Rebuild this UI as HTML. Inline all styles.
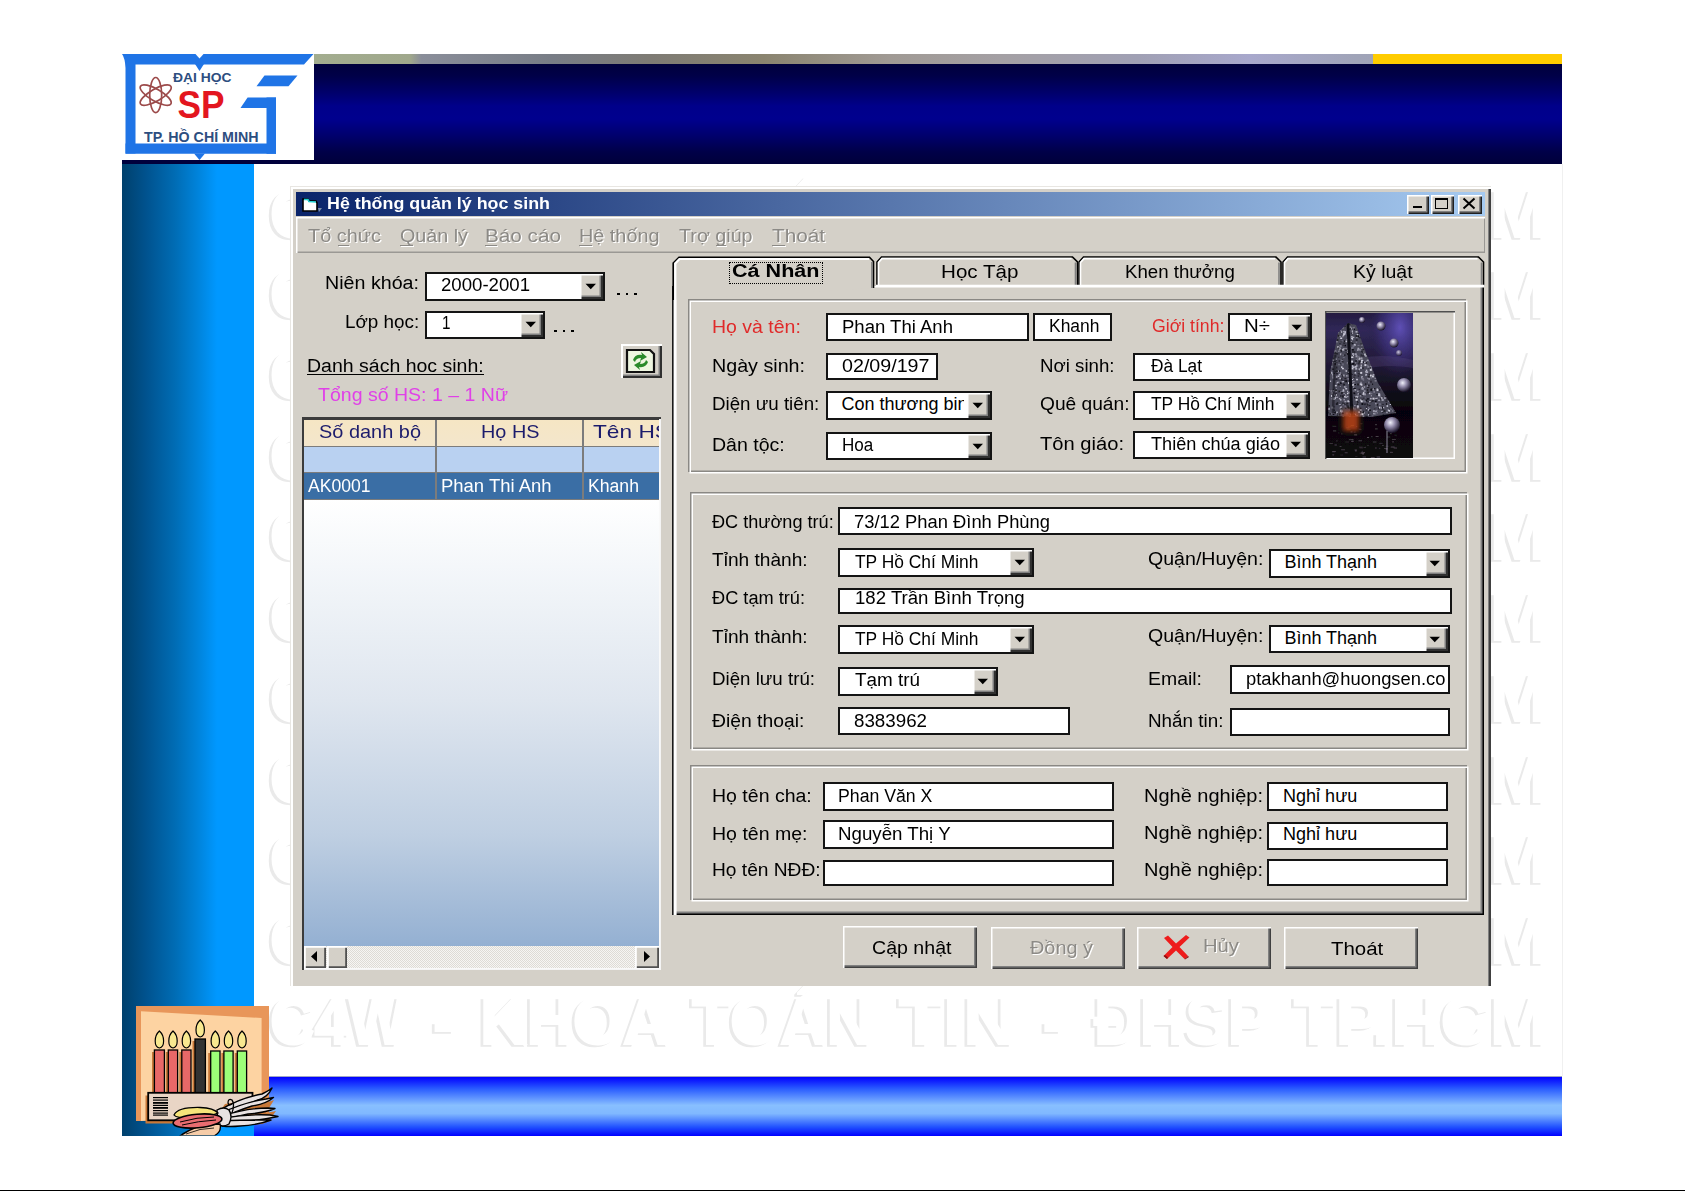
<!DOCTYPE html>
<html><head><meta charset="utf-8"><style>
html,body{margin:0;padding:0;}
body{width:1685px;height:1191px;position:relative;overflow:hidden;background:#fff;font-family:"Liberation Sans",sans-serif;}
.t{position:absolute;white-space:pre;line-height:1;transform-origin:0 0;}
</style></head><body>
<div style="position:absolute;left:0px;top:1190px;width:1685px;height:1px;background:#000"></div>
<div style="position:absolute;left:314px;top:54px;width:1248px;height:10px;background:linear-gradient(90deg,#a3ad8f 0%,#a0a88c 7.7%,#8a8e9a 8.6%,#787d86 19%,#7e7b74 27%,#8a846f 36%,#a09a94 46%,#a4a0a4 55%,#a0a0b4 66%,#a8a8cc 75%,#a0a4b8 83.5%,#9ca0b4 100%)"></div>
<div style="position:absolute;left:1373px;top:54px;width:189px;height:10px;background:#ffcc00"></div>
<div style="position:absolute;left:314px;top:64px;width:1248px;height:100px;background:linear-gradient(180deg,#00003c 0%,#000048 12%,#00006e 30%,#00008a 42%,#00008e 55%,#00006c 72%,#000048 88%,#00003a 100%)"></div>
<div style="position:absolute;left:122px;top:160px;width:192px;height:4px;background:#00003c"></div>
<div style="position:absolute;left:122px;top:54px;width:192px;height:106px;background:#fff"></div>
<div style="position:absolute;left:122px;top:164px;width:132px;height:972px;background:linear-gradient(90deg,#00406c 0%,#00528e 18%,#006cb4 40%,#0084dc 58%,#0098ff 72%,#0098ff 100%)"></div>
<div style="position:absolute;left:254px;top:1076px;width:1308px;height:1px;background:#a0a8c4"></div>
<div style="position:absolute;left:1562px;top:164px;width:1px;height:912px;background:#f0f0f0"></div>
<div style="position:absolute;left:254px;top:1077px;width:1308px;height:59px;background:linear-gradient(180deg,#0000ff 0%,#2a5cff 20%,#88bfff 48%,#80b8ff 62%,#2050ff 85%,#0000ff 100%)"></div>
<div class="t" style="left:266.7px;top:182.62px;font-size:66px;color:#eaeaea;font-weight:700;transform:scale(0.9332,1.0);-webkit-text-stroke:1.5px #eaeaea;filter:blur(0.5px);">C4W</div>
<div class="t" style="left:429.9px;top:182.62px;font-size:66px;color:#eaeaea;font-weight:700;transform:scale(1.0389,1.0);-webkit-text-stroke:1.5px #eaeaea;filter:blur(0.5px);">-</div>
<div class="t" style="left:477.1px;top:182.62px;font-size:66px;color:#eaeaea;font-weight:700;transform:scale(0.9735,1.0);-webkit-text-stroke:1.5px #eaeaea;filter:blur(0.5px);">KHOA</div>
<div class="t" style="left:689.0px;top:182.62px;font-size:66px;color:#eaeaea;font-weight:700;transform:scale(0.9740,1.0);-webkit-text-stroke:1.5px #eaeaea;filter:blur(0.5px);">TOÁN</div>
<div class="t" style="left:896.0px;top:182.62px;font-size:66px;color:#eaeaea;font-weight:700;transform:scale(1.0979,1.0);-webkit-text-stroke:1.5px #eaeaea;filter:blur(0.5px);">TIN</div>
<div class="t" style="left:1039.8px;top:182.62px;font-size:66px;color:#eaeaea;font-weight:700;transform:scale(0.8889,1.0);-webkit-text-stroke:1.5px #eaeaea;filter:blur(0.5px);">-</div>
<div class="t" style="left:1091.0px;top:182.62px;font-size:66px;color:#eaeaea;font-weight:700;transform:scale(0.9595,1.0);-webkit-text-stroke:1.5px #eaeaea;filter:blur(0.5px);">ĐHSP</div>
<div class="t" style="left:1291.0px;top:182.62px;font-size:66px;color:#eaeaea;font-weight:700;transform:scale(1.0354,1.0);-webkit-text-stroke:1.5px #eaeaea;filter:blur(0.5px);">TP.HCM</div>
<div class="t" style="left:269.7px;top:180.62px;font-size:66px;color:#ffffff;font-weight:700;transform:scale(0.9332,1.0);-webkit-text-stroke:2px #fff;">C4W</div>
<div class="t" style="left:432.9px;top:180.62px;font-size:66px;color:#ffffff;font-weight:700;transform:scale(1.0389,1.0);-webkit-text-stroke:2px #fff;">-</div>
<div class="t" style="left:480.1px;top:180.62px;font-size:66px;color:#ffffff;font-weight:700;transform:scale(0.9735,1.0);-webkit-text-stroke:2px #fff;">KHOA</div>
<div class="t" style="left:692.0px;top:180.62px;font-size:66px;color:#ffffff;font-weight:700;transform:scale(0.9740,1.0);-webkit-text-stroke:2px #fff;">TOÁN</div>
<div class="t" style="left:899.0px;top:180.62px;font-size:66px;color:#ffffff;font-weight:700;transform:scale(1.0979,1.0);-webkit-text-stroke:2px #fff;">TIN</div>
<div class="t" style="left:1042.8px;top:180.62px;font-size:66px;color:#ffffff;font-weight:700;transform:scale(0.8889,1.0);-webkit-text-stroke:2px #fff;">-</div>
<div class="t" style="left:1094.0px;top:180.62px;font-size:66px;color:#ffffff;font-weight:700;transform:scale(0.9595,1.0);-webkit-text-stroke:2px #fff;">ĐHSP</div>
<div class="t" style="left:1294.0px;top:180.62px;font-size:66px;color:#ffffff;font-weight:700;transform:scale(1.0354,1.0);-webkit-text-stroke:2px #fff;">TP.HCM</div>
<div class="t" style="left:266.7px;top:263.32px;font-size:66px;color:#eaeaea;font-weight:700;transform:scale(0.9332,1.0);-webkit-text-stroke:1.5px #eaeaea;filter:blur(0.5px);">C4W</div>
<div class="t" style="left:429.9px;top:263.32px;font-size:66px;color:#eaeaea;font-weight:700;transform:scale(1.0389,1.0);-webkit-text-stroke:1.5px #eaeaea;filter:blur(0.5px);">-</div>
<div class="t" style="left:477.1px;top:263.32px;font-size:66px;color:#eaeaea;font-weight:700;transform:scale(0.9735,1.0);-webkit-text-stroke:1.5px #eaeaea;filter:blur(0.5px);">KHOA</div>
<div class="t" style="left:689.0px;top:263.32px;font-size:66px;color:#eaeaea;font-weight:700;transform:scale(0.9740,1.0);-webkit-text-stroke:1.5px #eaeaea;filter:blur(0.5px);">TOÁN</div>
<div class="t" style="left:896.0px;top:263.32px;font-size:66px;color:#eaeaea;font-weight:700;transform:scale(1.0979,1.0);-webkit-text-stroke:1.5px #eaeaea;filter:blur(0.5px);">TIN</div>
<div class="t" style="left:1039.8px;top:263.32px;font-size:66px;color:#eaeaea;font-weight:700;transform:scale(0.8889,1.0);-webkit-text-stroke:1.5px #eaeaea;filter:blur(0.5px);">-</div>
<div class="t" style="left:1091.0px;top:263.32px;font-size:66px;color:#eaeaea;font-weight:700;transform:scale(0.9595,1.0);-webkit-text-stroke:1.5px #eaeaea;filter:blur(0.5px);">ĐHSP</div>
<div class="t" style="left:1291.0px;top:263.32px;font-size:66px;color:#eaeaea;font-weight:700;transform:scale(1.0354,1.0);-webkit-text-stroke:1.5px #eaeaea;filter:blur(0.5px);">TP.HCM</div>
<div class="t" style="left:269.7px;top:261.32px;font-size:66px;color:#ffffff;font-weight:700;transform:scale(0.9332,1.0);-webkit-text-stroke:2px #fff;">C4W</div>
<div class="t" style="left:432.9px;top:261.32px;font-size:66px;color:#ffffff;font-weight:700;transform:scale(1.0389,1.0);-webkit-text-stroke:2px #fff;">-</div>
<div class="t" style="left:480.1px;top:261.32px;font-size:66px;color:#ffffff;font-weight:700;transform:scale(0.9735,1.0);-webkit-text-stroke:2px #fff;">KHOA</div>
<div class="t" style="left:692.0px;top:261.32px;font-size:66px;color:#ffffff;font-weight:700;transform:scale(0.9740,1.0);-webkit-text-stroke:2px #fff;">TOÁN</div>
<div class="t" style="left:899.0px;top:261.32px;font-size:66px;color:#ffffff;font-weight:700;transform:scale(1.0979,1.0);-webkit-text-stroke:2px #fff;">TIN</div>
<div class="t" style="left:1042.8px;top:261.32px;font-size:66px;color:#ffffff;font-weight:700;transform:scale(0.8889,1.0);-webkit-text-stroke:2px #fff;">-</div>
<div class="t" style="left:1094.0px;top:261.32px;font-size:66px;color:#ffffff;font-weight:700;transform:scale(0.9595,1.0);-webkit-text-stroke:2px #fff;">ĐHSP</div>
<div class="t" style="left:1294.0px;top:261.32px;font-size:66px;color:#ffffff;font-weight:700;transform:scale(1.0354,1.0);-webkit-text-stroke:2px #fff;">TP.HCM</div>
<div class="t" style="left:266.7px;top:344.02px;font-size:66px;color:#eaeaea;font-weight:700;transform:scale(0.9332,1.0);-webkit-text-stroke:1.5px #eaeaea;filter:blur(0.5px);">C4W</div>
<div class="t" style="left:429.9px;top:344.02px;font-size:66px;color:#eaeaea;font-weight:700;transform:scale(1.0389,1.0);-webkit-text-stroke:1.5px #eaeaea;filter:blur(0.5px);">-</div>
<div class="t" style="left:477.1px;top:344.02px;font-size:66px;color:#eaeaea;font-weight:700;transform:scale(0.9735,1.0);-webkit-text-stroke:1.5px #eaeaea;filter:blur(0.5px);">KHOA</div>
<div class="t" style="left:689.0px;top:344.02px;font-size:66px;color:#eaeaea;font-weight:700;transform:scale(0.9740,1.0);-webkit-text-stroke:1.5px #eaeaea;filter:blur(0.5px);">TOÁN</div>
<div class="t" style="left:896.0px;top:344.02px;font-size:66px;color:#eaeaea;font-weight:700;transform:scale(1.0979,1.0);-webkit-text-stroke:1.5px #eaeaea;filter:blur(0.5px);">TIN</div>
<div class="t" style="left:1039.8px;top:344.02px;font-size:66px;color:#eaeaea;font-weight:700;transform:scale(0.8889,1.0);-webkit-text-stroke:1.5px #eaeaea;filter:blur(0.5px);">-</div>
<div class="t" style="left:1091.0px;top:344.02px;font-size:66px;color:#eaeaea;font-weight:700;transform:scale(0.9595,1.0);-webkit-text-stroke:1.5px #eaeaea;filter:blur(0.5px);">ĐHSP</div>
<div class="t" style="left:1291.0px;top:344.02px;font-size:66px;color:#eaeaea;font-weight:700;transform:scale(1.0354,1.0);-webkit-text-stroke:1.5px #eaeaea;filter:blur(0.5px);">TP.HCM</div>
<div class="t" style="left:269.7px;top:342.02px;font-size:66px;color:#ffffff;font-weight:700;transform:scale(0.9332,1.0);-webkit-text-stroke:2px #fff;">C4W</div>
<div class="t" style="left:432.9px;top:342.02px;font-size:66px;color:#ffffff;font-weight:700;transform:scale(1.0389,1.0);-webkit-text-stroke:2px #fff;">-</div>
<div class="t" style="left:480.1px;top:342.02px;font-size:66px;color:#ffffff;font-weight:700;transform:scale(0.9735,1.0);-webkit-text-stroke:2px #fff;">KHOA</div>
<div class="t" style="left:692.0px;top:342.02px;font-size:66px;color:#ffffff;font-weight:700;transform:scale(0.9740,1.0);-webkit-text-stroke:2px #fff;">TOÁN</div>
<div class="t" style="left:899.0px;top:342.02px;font-size:66px;color:#ffffff;font-weight:700;transform:scale(1.0979,1.0);-webkit-text-stroke:2px #fff;">TIN</div>
<div class="t" style="left:1042.8px;top:342.02px;font-size:66px;color:#ffffff;font-weight:700;transform:scale(0.8889,1.0);-webkit-text-stroke:2px #fff;">-</div>
<div class="t" style="left:1094.0px;top:342.02px;font-size:66px;color:#ffffff;font-weight:700;transform:scale(0.9595,1.0);-webkit-text-stroke:2px #fff;">ĐHSP</div>
<div class="t" style="left:1294.0px;top:342.02px;font-size:66px;color:#ffffff;font-weight:700;transform:scale(1.0354,1.0);-webkit-text-stroke:2px #fff;">TP.HCM</div>
<div class="t" style="left:266.7px;top:424.72px;font-size:66px;color:#eaeaea;font-weight:700;transform:scale(0.9332,1.0);-webkit-text-stroke:1.5px #eaeaea;filter:blur(0.5px);">C4W</div>
<div class="t" style="left:429.9px;top:424.72px;font-size:66px;color:#eaeaea;font-weight:700;transform:scale(1.0389,1.0);-webkit-text-stroke:1.5px #eaeaea;filter:blur(0.5px);">-</div>
<div class="t" style="left:477.1px;top:424.72px;font-size:66px;color:#eaeaea;font-weight:700;transform:scale(0.9735,1.0);-webkit-text-stroke:1.5px #eaeaea;filter:blur(0.5px);">KHOA</div>
<div class="t" style="left:689.0px;top:424.72px;font-size:66px;color:#eaeaea;font-weight:700;transform:scale(0.9740,1.0);-webkit-text-stroke:1.5px #eaeaea;filter:blur(0.5px);">TOÁN</div>
<div class="t" style="left:896.0px;top:424.72px;font-size:66px;color:#eaeaea;font-weight:700;transform:scale(1.0979,1.0);-webkit-text-stroke:1.5px #eaeaea;filter:blur(0.5px);">TIN</div>
<div class="t" style="left:1039.8px;top:424.72px;font-size:66px;color:#eaeaea;font-weight:700;transform:scale(0.8889,1.0);-webkit-text-stroke:1.5px #eaeaea;filter:blur(0.5px);">-</div>
<div class="t" style="left:1091.0px;top:424.72px;font-size:66px;color:#eaeaea;font-weight:700;transform:scale(0.9595,1.0);-webkit-text-stroke:1.5px #eaeaea;filter:blur(0.5px);">ĐHSP</div>
<div class="t" style="left:1291.0px;top:424.72px;font-size:66px;color:#eaeaea;font-weight:700;transform:scale(1.0354,1.0);-webkit-text-stroke:1.5px #eaeaea;filter:blur(0.5px);">TP.HCM</div>
<div class="t" style="left:269.7px;top:422.72px;font-size:66px;color:#ffffff;font-weight:700;transform:scale(0.9332,1.0);-webkit-text-stroke:2px #fff;">C4W</div>
<div class="t" style="left:432.9px;top:422.72px;font-size:66px;color:#ffffff;font-weight:700;transform:scale(1.0389,1.0);-webkit-text-stroke:2px #fff;">-</div>
<div class="t" style="left:480.1px;top:422.72px;font-size:66px;color:#ffffff;font-weight:700;transform:scale(0.9735,1.0);-webkit-text-stroke:2px #fff;">KHOA</div>
<div class="t" style="left:692.0px;top:422.72px;font-size:66px;color:#ffffff;font-weight:700;transform:scale(0.9740,1.0);-webkit-text-stroke:2px #fff;">TOÁN</div>
<div class="t" style="left:899.0px;top:422.72px;font-size:66px;color:#ffffff;font-weight:700;transform:scale(1.0979,1.0);-webkit-text-stroke:2px #fff;">TIN</div>
<div class="t" style="left:1042.8px;top:422.72px;font-size:66px;color:#ffffff;font-weight:700;transform:scale(0.8889,1.0);-webkit-text-stroke:2px #fff;">-</div>
<div class="t" style="left:1094.0px;top:422.72px;font-size:66px;color:#ffffff;font-weight:700;transform:scale(0.9595,1.0);-webkit-text-stroke:2px #fff;">ĐHSP</div>
<div class="t" style="left:1294.0px;top:422.72px;font-size:66px;color:#ffffff;font-weight:700;transform:scale(1.0354,1.0);-webkit-text-stroke:2px #fff;">TP.HCM</div>
<div class="t" style="left:266.7px;top:505.42px;font-size:66px;color:#eaeaea;font-weight:700;transform:scale(0.9332,1.0);-webkit-text-stroke:1.5px #eaeaea;filter:blur(0.5px);">C4W</div>
<div class="t" style="left:429.9px;top:505.42px;font-size:66px;color:#eaeaea;font-weight:700;transform:scale(1.0389,1.0);-webkit-text-stroke:1.5px #eaeaea;filter:blur(0.5px);">-</div>
<div class="t" style="left:477.1px;top:505.42px;font-size:66px;color:#eaeaea;font-weight:700;transform:scale(0.9735,1.0);-webkit-text-stroke:1.5px #eaeaea;filter:blur(0.5px);">KHOA</div>
<div class="t" style="left:689.0px;top:505.42px;font-size:66px;color:#eaeaea;font-weight:700;transform:scale(0.9740,1.0);-webkit-text-stroke:1.5px #eaeaea;filter:blur(0.5px);">TOÁN</div>
<div class="t" style="left:896.0px;top:505.42px;font-size:66px;color:#eaeaea;font-weight:700;transform:scale(1.0979,1.0);-webkit-text-stroke:1.5px #eaeaea;filter:blur(0.5px);">TIN</div>
<div class="t" style="left:1039.8px;top:505.42px;font-size:66px;color:#eaeaea;font-weight:700;transform:scale(0.8889,1.0);-webkit-text-stroke:1.5px #eaeaea;filter:blur(0.5px);">-</div>
<div class="t" style="left:1091.0px;top:505.42px;font-size:66px;color:#eaeaea;font-weight:700;transform:scale(0.9595,1.0);-webkit-text-stroke:1.5px #eaeaea;filter:blur(0.5px);">ĐHSP</div>
<div class="t" style="left:1291.0px;top:505.42px;font-size:66px;color:#eaeaea;font-weight:700;transform:scale(1.0354,1.0);-webkit-text-stroke:1.5px #eaeaea;filter:blur(0.5px);">TP.HCM</div>
<div class="t" style="left:269.7px;top:503.42px;font-size:66px;color:#ffffff;font-weight:700;transform:scale(0.9332,1.0);-webkit-text-stroke:2px #fff;">C4W</div>
<div class="t" style="left:432.9px;top:503.42px;font-size:66px;color:#ffffff;font-weight:700;transform:scale(1.0389,1.0);-webkit-text-stroke:2px #fff;">-</div>
<div class="t" style="left:480.1px;top:503.42px;font-size:66px;color:#ffffff;font-weight:700;transform:scale(0.9735,1.0);-webkit-text-stroke:2px #fff;">KHOA</div>
<div class="t" style="left:692.0px;top:503.42px;font-size:66px;color:#ffffff;font-weight:700;transform:scale(0.9740,1.0);-webkit-text-stroke:2px #fff;">TOÁN</div>
<div class="t" style="left:899.0px;top:503.42px;font-size:66px;color:#ffffff;font-weight:700;transform:scale(1.0979,1.0);-webkit-text-stroke:2px #fff;">TIN</div>
<div class="t" style="left:1042.8px;top:503.42px;font-size:66px;color:#ffffff;font-weight:700;transform:scale(0.8889,1.0);-webkit-text-stroke:2px #fff;">-</div>
<div class="t" style="left:1094.0px;top:503.42px;font-size:66px;color:#ffffff;font-weight:700;transform:scale(0.9595,1.0);-webkit-text-stroke:2px #fff;">ĐHSP</div>
<div class="t" style="left:1294.0px;top:503.42px;font-size:66px;color:#ffffff;font-weight:700;transform:scale(1.0354,1.0);-webkit-text-stroke:2px #fff;">TP.HCM</div>
<div class="t" style="left:266.7px;top:586.12px;font-size:66px;color:#eaeaea;font-weight:700;transform:scale(0.9332,1.0);-webkit-text-stroke:1.5px #eaeaea;filter:blur(0.5px);">C4W</div>
<div class="t" style="left:429.9px;top:586.12px;font-size:66px;color:#eaeaea;font-weight:700;transform:scale(1.0389,1.0);-webkit-text-stroke:1.5px #eaeaea;filter:blur(0.5px);">-</div>
<div class="t" style="left:477.1px;top:586.12px;font-size:66px;color:#eaeaea;font-weight:700;transform:scale(0.9735,1.0);-webkit-text-stroke:1.5px #eaeaea;filter:blur(0.5px);">KHOA</div>
<div class="t" style="left:689.0px;top:586.12px;font-size:66px;color:#eaeaea;font-weight:700;transform:scale(0.9740,1.0);-webkit-text-stroke:1.5px #eaeaea;filter:blur(0.5px);">TOÁN</div>
<div class="t" style="left:896.0px;top:586.12px;font-size:66px;color:#eaeaea;font-weight:700;transform:scale(1.0979,1.0);-webkit-text-stroke:1.5px #eaeaea;filter:blur(0.5px);">TIN</div>
<div class="t" style="left:1039.8px;top:586.12px;font-size:66px;color:#eaeaea;font-weight:700;transform:scale(0.8889,1.0);-webkit-text-stroke:1.5px #eaeaea;filter:blur(0.5px);">-</div>
<div class="t" style="left:1091.0px;top:586.12px;font-size:66px;color:#eaeaea;font-weight:700;transform:scale(0.9595,1.0);-webkit-text-stroke:1.5px #eaeaea;filter:blur(0.5px);">ĐHSP</div>
<div class="t" style="left:1291.0px;top:586.12px;font-size:66px;color:#eaeaea;font-weight:700;transform:scale(1.0354,1.0);-webkit-text-stroke:1.5px #eaeaea;filter:blur(0.5px);">TP.HCM</div>
<div class="t" style="left:269.7px;top:584.12px;font-size:66px;color:#ffffff;font-weight:700;transform:scale(0.9332,1.0);-webkit-text-stroke:2px #fff;">C4W</div>
<div class="t" style="left:432.9px;top:584.12px;font-size:66px;color:#ffffff;font-weight:700;transform:scale(1.0389,1.0);-webkit-text-stroke:2px #fff;">-</div>
<div class="t" style="left:480.1px;top:584.12px;font-size:66px;color:#ffffff;font-weight:700;transform:scale(0.9735,1.0);-webkit-text-stroke:2px #fff;">KHOA</div>
<div class="t" style="left:692.0px;top:584.12px;font-size:66px;color:#ffffff;font-weight:700;transform:scale(0.9740,1.0);-webkit-text-stroke:2px #fff;">TOÁN</div>
<div class="t" style="left:899.0px;top:584.12px;font-size:66px;color:#ffffff;font-weight:700;transform:scale(1.0979,1.0);-webkit-text-stroke:2px #fff;">TIN</div>
<div class="t" style="left:1042.8px;top:584.12px;font-size:66px;color:#ffffff;font-weight:700;transform:scale(0.8889,1.0);-webkit-text-stroke:2px #fff;">-</div>
<div class="t" style="left:1094.0px;top:584.12px;font-size:66px;color:#ffffff;font-weight:700;transform:scale(0.9595,1.0);-webkit-text-stroke:2px #fff;">ĐHSP</div>
<div class="t" style="left:1294.0px;top:584.12px;font-size:66px;color:#ffffff;font-weight:700;transform:scale(1.0354,1.0);-webkit-text-stroke:2px #fff;">TP.HCM</div>
<div class="t" style="left:266.7px;top:666.82px;font-size:66px;color:#eaeaea;font-weight:700;transform:scale(0.9332,1.0);-webkit-text-stroke:1.5px #eaeaea;filter:blur(0.5px);">C4W</div>
<div class="t" style="left:429.9px;top:666.82px;font-size:66px;color:#eaeaea;font-weight:700;transform:scale(1.0389,1.0);-webkit-text-stroke:1.5px #eaeaea;filter:blur(0.5px);">-</div>
<div class="t" style="left:477.1px;top:666.82px;font-size:66px;color:#eaeaea;font-weight:700;transform:scale(0.9735,1.0);-webkit-text-stroke:1.5px #eaeaea;filter:blur(0.5px);">KHOA</div>
<div class="t" style="left:689.0px;top:666.82px;font-size:66px;color:#eaeaea;font-weight:700;transform:scale(0.9740,1.0);-webkit-text-stroke:1.5px #eaeaea;filter:blur(0.5px);">TOÁN</div>
<div class="t" style="left:896.0px;top:666.82px;font-size:66px;color:#eaeaea;font-weight:700;transform:scale(1.0979,1.0);-webkit-text-stroke:1.5px #eaeaea;filter:blur(0.5px);">TIN</div>
<div class="t" style="left:1039.8px;top:666.82px;font-size:66px;color:#eaeaea;font-weight:700;transform:scale(0.8889,1.0);-webkit-text-stroke:1.5px #eaeaea;filter:blur(0.5px);">-</div>
<div class="t" style="left:1091.0px;top:666.82px;font-size:66px;color:#eaeaea;font-weight:700;transform:scale(0.9595,1.0);-webkit-text-stroke:1.5px #eaeaea;filter:blur(0.5px);">ĐHSP</div>
<div class="t" style="left:1291.0px;top:666.82px;font-size:66px;color:#eaeaea;font-weight:700;transform:scale(1.0354,1.0);-webkit-text-stroke:1.5px #eaeaea;filter:blur(0.5px);">TP.HCM</div>
<div class="t" style="left:269.7px;top:664.82px;font-size:66px;color:#ffffff;font-weight:700;transform:scale(0.9332,1.0);-webkit-text-stroke:2px #fff;">C4W</div>
<div class="t" style="left:432.9px;top:664.82px;font-size:66px;color:#ffffff;font-weight:700;transform:scale(1.0389,1.0);-webkit-text-stroke:2px #fff;">-</div>
<div class="t" style="left:480.1px;top:664.82px;font-size:66px;color:#ffffff;font-weight:700;transform:scale(0.9735,1.0);-webkit-text-stroke:2px #fff;">KHOA</div>
<div class="t" style="left:692.0px;top:664.82px;font-size:66px;color:#ffffff;font-weight:700;transform:scale(0.9740,1.0);-webkit-text-stroke:2px #fff;">TOÁN</div>
<div class="t" style="left:899.0px;top:664.82px;font-size:66px;color:#ffffff;font-weight:700;transform:scale(1.0979,1.0);-webkit-text-stroke:2px #fff;">TIN</div>
<div class="t" style="left:1042.8px;top:664.82px;font-size:66px;color:#ffffff;font-weight:700;transform:scale(0.8889,1.0);-webkit-text-stroke:2px #fff;">-</div>
<div class="t" style="left:1094.0px;top:664.82px;font-size:66px;color:#ffffff;font-weight:700;transform:scale(0.9595,1.0);-webkit-text-stroke:2px #fff;">ĐHSP</div>
<div class="t" style="left:1294.0px;top:664.82px;font-size:66px;color:#ffffff;font-weight:700;transform:scale(1.0354,1.0);-webkit-text-stroke:2px #fff;">TP.HCM</div>
<div class="t" style="left:266.7px;top:747.52px;font-size:66px;color:#eaeaea;font-weight:700;transform:scale(0.9332,1.0);-webkit-text-stroke:1.5px #eaeaea;filter:blur(0.5px);">C4W</div>
<div class="t" style="left:429.9px;top:747.52px;font-size:66px;color:#eaeaea;font-weight:700;transform:scale(1.0389,1.0);-webkit-text-stroke:1.5px #eaeaea;filter:blur(0.5px);">-</div>
<div class="t" style="left:477.1px;top:747.52px;font-size:66px;color:#eaeaea;font-weight:700;transform:scale(0.9735,1.0);-webkit-text-stroke:1.5px #eaeaea;filter:blur(0.5px);">KHOA</div>
<div class="t" style="left:689.0px;top:747.52px;font-size:66px;color:#eaeaea;font-weight:700;transform:scale(0.9740,1.0);-webkit-text-stroke:1.5px #eaeaea;filter:blur(0.5px);">TOÁN</div>
<div class="t" style="left:896.0px;top:747.52px;font-size:66px;color:#eaeaea;font-weight:700;transform:scale(1.0979,1.0);-webkit-text-stroke:1.5px #eaeaea;filter:blur(0.5px);">TIN</div>
<div class="t" style="left:1039.8px;top:747.52px;font-size:66px;color:#eaeaea;font-weight:700;transform:scale(0.8889,1.0);-webkit-text-stroke:1.5px #eaeaea;filter:blur(0.5px);">-</div>
<div class="t" style="left:1091.0px;top:747.52px;font-size:66px;color:#eaeaea;font-weight:700;transform:scale(0.9595,1.0);-webkit-text-stroke:1.5px #eaeaea;filter:blur(0.5px);">ĐHSP</div>
<div class="t" style="left:1291.0px;top:747.52px;font-size:66px;color:#eaeaea;font-weight:700;transform:scale(1.0354,1.0);-webkit-text-stroke:1.5px #eaeaea;filter:blur(0.5px);">TP.HCM</div>
<div class="t" style="left:269.7px;top:745.52px;font-size:66px;color:#ffffff;font-weight:700;transform:scale(0.9332,1.0);-webkit-text-stroke:2px #fff;">C4W</div>
<div class="t" style="left:432.9px;top:745.52px;font-size:66px;color:#ffffff;font-weight:700;transform:scale(1.0389,1.0);-webkit-text-stroke:2px #fff;">-</div>
<div class="t" style="left:480.1px;top:745.52px;font-size:66px;color:#ffffff;font-weight:700;transform:scale(0.9735,1.0);-webkit-text-stroke:2px #fff;">KHOA</div>
<div class="t" style="left:692.0px;top:745.52px;font-size:66px;color:#ffffff;font-weight:700;transform:scale(0.9740,1.0);-webkit-text-stroke:2px #fff;">TOÁN</div>
<div class="t" style="left:899.0px;top:745.52px;font-size:66px;color:#ffffff;font-weight:700;transform:scale(1.0979,1.0);-webkit-text-stroke:2px #fff;">TIN</div>
<div class="t" style="left:1042.8px;top:745.52px;font-size:66px;color:#ffffff;font-weight:700;transform:scale(0.8889,1.0);-webkit-text-stroke:2px #fff;">-</div>
<div class="t" style="left:1094.0px;top:745.52px;font-size:66px;color:#ffffff;font-weight:700;transform:scale(0.9595,1.0);-webkit-text-stroke:2px #fff;">ĐHSP</div>
<div class="t" style="left:1294.0px;top:745.52px;font-size:66px;color:#ffffff;font-weight:700;transform:scale(1.0354,1.0);-webkit-text-stroke:2px #fff;">TP.HCM</div>
<div class="t" style="left:266.7px;top:828.22px;font-size:66px;color:#eaeaea;font-weight:700;transform:scale(0.9332,1.0);-webkit-text-stroke:1.5px #eaeaea;filter:blur(0.5px);">C4W</div>
<div class="t" style="left:429.9px;top:828.22px;font-size:66px;color:#eaeaea;font-weight:700;transform:scale(1.0389,1.0);-webkit-text-stroke:1.5px #eaeaea;filter:blur(0.5px);">-</div>
<div class="t" style="left:477.1px;top:828.22px;font-size:66px;color:#eaeaea;font-weight:700;transform:scale(0.9735,1.0);-webkit-text-stroke:1.5px #eaeaea;filter:blur(0.5px);">KHOA</div>
<div class="t" style="left:689.0px;top:828.22px;font-size:66px;color:#eaeaea;font-weight:700;transform:scale(0.9740,1.0);-webkit-text-stroke:1.5px #eaeaea;filter:blur(0.5px);">TOÁN</div>
<div class="t" style="left:896.0px;top:828.22px;font-size:66px;color:#eaeaea;font-weight:700;transform:scale(1.0979,1.0);-webkit-text-stroke:1.5px #eaeaea;filter:blur(0.5px);">TIN</div>
<div class="t" style="left:1039.8px;top:828.22px;font-size:66px;color:#eaeaea;font-weight:700;transform:scale(0.8889,1.0);-webkit-text-stroke:1.5px #eaeaea;filter:blur(0.5px);">-</div>
<div class="t" style="left:1091.0px;top:828.22px;font-size:66px;color:#eaeaea;font-weight:700;transform:scale(0.9595,1.0);-webkit-text-stroke:1.5px #eaeaea;filter:blur(0.5px);">ĐHSP</div>
<div class="t" style="left:1291.0px;top:828.22px;font-size:66px;color:#eaeaea;font-weight:700;transform:scale(1.0354,1.0);-webkit-text-stroke:1.5px #eaeaea;filter:blur(0.5px);">TP.HCM</div>
<div class="t" style="left:269.7px;top:826.22px;font-size:66px;color:#ffffff;font-weight:700;transform:scale(0.9332,1.0);-webkit-text-stroke:2px #fff;">C4W</div>
<div class="t" style="left:432.9px;top:826.22px;font-size:66px;color:#ffffff;font-weight:700;transform:scale(1.0389,1.0);-webkit-text-stroke:2px #fff;">-</div>
<div class="t" style="left:480.1px;top:826.22px;font-size:66px;color:#ffffff;font-weight:700;transform:scale(0.9735,1.0);-webkit-text-stroke:2px #fff;">KHOA</div>
<div class="t" style="left:692.0px;top:826.22px;font-size:66px;color:#ffffff;font-weight:700;transform:scale(0.9740,1.0);-webkit-text-stroke:2px #fff;">TOÁN</div>
<div class="t" style="left:899.0px;top:826.22px;font-size:66px;color:#ffffff;font-weight:700;transform:scale(1.0979,1.0);-webkit-text-stroke:2px #fff;">TIN</div>
<div class="t" style="left:1042.8px;top:826.22px;font-size:66px;color:#ffffff;font-weight:700;transform:scale(0.8889,1.0);-webkit-text-stroke:2px #fff;">-</div>
<div class="t" style="left:1094.0px;top:826.22px;font-size:66px;color:#ffffff;font-weight:700;transform:scale(0.9595,1.0);-webkit-text-stroke:2px #fff;">ĐHSP</div>
<div class="t" style="left:1294.0px;top:826.22px;font-size:66px;color:#ffffff;font-weight:700;transform:scale(1.0354,1.0);-webkit-text-stroke:2px #fff;">TP.HCM</div>
<div class="t" style="left:266.7px;top:908.92px;font-size:66px;color:#eaeaea;font-weight:700;transform:scale(0.9332,1.0);-webkit-text-stroke:1.5px #eaeaea;filter:blur(0.5px);">C4W</div>
<div class="t" style="left:429.9px;top:908.92px;font-size:66px;color:#eaeaea;font-weight:700;transform:scale(1.0389,1.0);-webkit-text-stroke:1.5px #eaeaea;filter:blur(0.5px);">-</div>
<div class="t" style="left:477.1px;top:908.92px;font-size:66px;color:#eaeaea;font-weight:700;transform:scale(0.9735,1.0);-webkit-text-stroke:1.5px #eaeaea;filter:blur(0.5px);">KHOA</div>
<div class="t" style="left:689.0px;top:908.92px;font-size:66px;color:#eaeaea;font-weight:700;transform:scale(0.9740,1.0);-webkit-text-stroke:1.5px #eaeaea;filter:blur(0.5px);">TOÁN</div>
<div class="t" style="left:896.0px;top:908.92px;font-size:66px;color:#eaeaea;font-weight:700;transform:scale(1.0979,1.0);-webkit-text-stroke:1.5px #eaeaea;filter:blur(0.5px);">TIN</div>
<div class="t" style="left:1039.8px;top:908.92px;font-size:66px;color:#eaeaea;font-weight:700;transform:scale(0.8889,1.0);-webkit-text-stroke:1.5px #eaeaea;filter:blur(0.5px);">-</div>
<div class="t" style="left:1091.0px;top:908.92px;font-size:66px;color:#eaeaea;font-weight:700;transform:scale(0.9595,1.0);-webkit-text-stroke:1.5px #eaeaea;filter:blur(0.5px);">ĐHSP</div>
<div class="t" style="left:1291.0px;top:908.92px;font-size:66px;color:#eaeaea;font-weight:700;transform:scale(1.0354,1.0);-webkit-text-stroke:1.5px #eaeaea;filter:blur(0.5px);">TP.HCM</div>
<div class="t" style="left:269.7px;top:906.92px;font-size:66px;color:#ffffff;font-weight:700;transform:scale(0.9332,1.0);-webkit-text-stroke:2px #fff;">C4W</div>
<div class="t" style="left:432.9px;top:906.92px;font-size:66px;color:#ffffff;font-weight:700;transform:scale(1.0389,1.0);-webkit-text-stroke:2px #fff;">-</div>
<div class="t" style="left:480.1px;top:906.92px;font-size:66px;color:#ffffff;font-weight:700;transform:scale(0.9735,1.0);-webkit-text-stroke:2px #fff;">KHOA</div>
<div class="t" style="left:692.0px;top:906.92px;font-size:66px;color:#ffffff;font-weight:700;transform:scale(0.9740,1.0);-webkit-text-stroke:2px #fff;">TOÁN</div>
<div class="t" style="left:899.0px;top:906.92px;font-size:66px;color:#ffffff;font-weight:700;transform:scale(1.0979,1.0);-webkit-text-stroke:2px #fff;">TIN</div>
<div class="t" style="left:1042.8px;top:906.92px;font-size:66px;color:#ffffff;font-weight:700;transform:scale(0.8889,1.0);-webkit-text-stroke:2px #fff;">-</div>
<div class="t" style="left:1094.0px;top:906.92px;font-size:66px;color:#ffffff;font-weight:700;transform:scale(0.9595,1.0);-webkit-text-stroke:2px #fff;">ĐHSP</div>
<div class="t" style="left:1294.0px;top:906.92px;font-size:66px;color:#ffffff;font-weight:700;transform:scale(1.0354,1.0);-webkit-text-stroke:2px #fff;">TP.HCM</div>
<div class="t" style="left:266.7px;top:989.62px;font-size:66px;color:#eaeaea;font-weight:700;transform:scale(0.9332,1.0);-webkit-text-stroke:1.5px #eaeaea;filter:blur(0.5px);">C4W</div>
<div class="t" style="left:429.9px;top:989.62px;font-size:66px;color:#eaeaea;font-weight:700;transform:scale(1.0389,1.0);-webkit-text-stroke:1.5px #eaeaea;filter:blur(0.5px);">-</div>
<div class="t" style="left:477.1px;top:989.62px;font-size:66px;color:#eaeaea;font-weight:700;transform:scale(0.9735,1.0);-webkit-text-stroke:1.5px #eaeaea;filter:blur(0.5px);">KHOA</div>
<div class="t" style="left:689.0px;top:989.62px;font-size:66px;color:#eaeaea;font-weight:700;transform:scale(0.9740,1.0);-webkit-text-stroke:1.5px #eaeaea;filter:blur(0.5px);">TOÁN</div>
<div class="t" style="left:896.0px;top:989.62px;font-size:66px;color:#eaeaea;font-weight:700;transform:scale(1.0979,1.0);-webkit-text-stroke:1.5px #eaeaea;filter:blur(0.5px);">TIN</div>
<div class="t" style="left:1039.8px;top:989.62px;font-size:66px;color:#eaeaea;font-weight:700;transform:scale(0.8889,1.0);-webkit-text-stroke:1.5px #eaeaea;filter:blur(0.5px);">-</div>
<div class="t" style="left:1091.0px;top:989.62px;font-size:66px;color:#eaeaea;font-weight:700;transform:scale(0.9595,1.0);-webkit-text-stroke:1.5px #eaeaea;filter:blur(0.5px);">ĐHSP</div>
<div class="t" style="left:1291.0px;top:989.62px;font-size:66px;color:#eaeaea;font-weight:700;transform:scale(1.0354,1.0);-webkit-text-stroke:1.5px #eaeaea;filter:blur(0.5px);">TP.HCM</div>
<div class="t" style="left:269.7px;top:987.62px;font-size:66px;color:#ffffff;font-weight:700;transform:scale(0.9332,1.0);-webkit-text-stroke:2px #fff;">C4W</div>
<div class="t" style="left:432.9px;top:987.62px;font-size:66px;color:#ffffff;font-weight:700;transform:scale(1.0389,1.0);-webkit-text-stroke:2px #fff;">-</div>
<div class="t" style="left:480.1px;top:987.62px;font-size:66px;color:#ffffff;font-weight:700;transform:scale(0.9735,1.0);-webkit-text-stroke:2px #fff;">KHOA</div>
<div class="t" style="left:692.0px;top:987.62px;font-size:66px;color:#ffffff;font-weight:700;transform:scale(0.9740,1.0);-webkit-text-stroke:2px #fff;">TOÁN</div>
<div class="t" style="left:899.0px;top:987.62px;font-size:66px;color:#ffffff;font-weight:700;transform:scale(1.0979,1.0);-webkit-text-stroke:2px #fff;">TIN</div>
<div class="t" style="left:1042.8px;top:987.62px;font-size:66px;color:#ffffff;font-weight:700;transform:scale(0.8889,1.0);-webkit-text-stroke:2px #fff;">-</div>
<div class="t" style="left:1094.0px;top:987.62px;font-size:66px;color:#ffffff;font-weight:700;transform:scale(0.9595,1.0);-webkit-text-stroke:2px #fff;">ĐHSP</div>
<div class="t" style="left:1294.0px;top:987.62px;font-size:66px;color:#ffffff;font-weight:700;transform:scale(1.0354,1.0);-webkit-text-stroke:2px #fff;">TP.HCM</div>
<svg style="position:absolute;left:122px;top:54px" width="192" height="106" viewBox="0 0 192 106">
<g fill="#1f74e6">
<path d="M0 0 L191.5 0 L182 10.5 L13.5 10.5 L13.5 99.5 L3.5 99.5 L3.5 14 Q3 4 0 0 Z"/>
<path d="M3.5 89.5 L154 89.5 L154 99.8 L3.5 99.8 Z"/>
<path d="M144.5 43.5 L154 43.5 L154 99.8 L144.5 99.8 Z"/>
<path d="M125.6 43.5 L154 43.5 L154 54 L118.5 54 Z"/>
<path d="M142.5 21.5 L175.5 21.5 L166.5 32.2 L134.5 32.2 Z"/>
<path d="M73 10 L82 10 L77.5 17 Z"/>
<path d="M72 99.5 L83 99.5 L77.5 106 Z"/>
</g>
<path d="M73.5 0 L81.5 0 L77.5 4.5 Z" fill="#fff"/>
<g fill="none" stroke="#9c4a4a" stroke-width="1.7">
<ellipse cx="33.7" cy="41.1" rx="6" ry="17.6"/>
<ellipse cx="33.7" cy="41.1" rx="6" ry="17.6" transform="rotate(60 33.7 41.1)"/>
<ellipse cx="33.7" cy="41.1" rx="6" ry="17.6" transform="rotate(120 33.7 41.1)"/>
</g>
<text x="51" y="27.6" font-family="Liberation Sans" font-weight="700" font-size="13.2" fill="#2d4e80" textLength="58.5" lengthAdjust="spacingAndGlyphs">ĐẠI HỌC</text>
<text x="55.5" y="64.3" font-family="Liberation Sans" font-weight="700" font-size="38.5" fill="#e3161f" textLength="47" lengthAdjust="spacingAndGlyphs">SP</text>
<text x="22" y="87.5" font-family="Liberation Sans" font-weight="700" font-size="14.6" fill="#2d4e80" textLength="114.5" lengthAdjust="spacingAndGlyphs">TP. HỒ CHÍ MINH</text>
</svg>

<svg style="position:absolute;left:130px;top:1000px" width="160" height="136" viewBox="130 1000 160 136">
<defs><clipPath id="cc"><rect x="130" y="1000" width="160" height="135.6"/></clipPath></defs>
<g clip-path="url(#cc)">
<rect x="136" y="1006" width="133" height="115" fill="#e8965a"/>
<path d="M141 1011.3 L261.6 1018 L261.6 1110 L141 1121 Z" fill="#fdd3a2"/>
<g fill="#c87838"><rect x="152" y="1052" width="3" height="41"/><rect x="165.8" y="1052" width="3" height="41"/><rect x="179.3" y="1052" width="3" height="41"/><rect x="192.5" y="1041" width="3" height="52"/><rect x="208.2" y="1053" width="3" height="40"/><rect x="221.4" y="1053" width="3" height="40"/><rect x="234.8" y="1053" width="3" height="40"/></g>
<g stroke="#000" stroke-width="1.3">
<rect x="154.4" y="1050" width="10" height="43" fill="#e86868"/>
<rect x="168.3" y="1050" width="9.3" height="43" fill="#e86868"/>
<rect x="181.8" y="1050" width="9.2" height="43" fill="#e86868"/>
<rect x="195" y="1039" width="10.4" height="54" fill="#333"/>
<rect x="210.7" y="1051" width="9.3" height="42" fill="#9cff78"/>
<rect x="223.9" y="1051" width="9.2" height="42" fill="#9cff78"/>
<rect x="237.3" y="1051" width="9.3" height="42" fill="#9cff78"/>
</g>
<g fill="#f8e890" stroke="#000" stroke-width="1.2">
<path d="M159.4 1031 C165 1036 165 1047 159.4 1048 C153.8 1047 153.8 1036 159.4 1031 Z"/>
<path d="M173 1031 C178.6 1036 178.6 1047 173 1048 C167.4 1047 167.4 1036 173 1031 Z"/>
<path d="M186.4 1031 C192 1036 192 1047 186.4 1048 C180.8 1047 180.8 1036 186.4 1031 Z"/>
<path d="M200.2 1020 C205.8 1025 205.8 1036 200.2 1037 C194.6 1036 194.6 1025 200.2 1020 Z"/>
<path d="M215.3 1031 C220.9 1036 220.9 1047 215.3 1048 C209.7 1047 209.7 1036 215.3 1031 Z"/>
<path d="M228.5 1031 C234.1 1036 234.1 1047 228.5 1048 C222.9 1047 222.9 1036 228.5 1031 Z"/>
<path d="M242 1031 C247.6 1036 247.6 1047 242 1048 C236.4 1047 236.4 1036 242 1031 Z"/>
</g>
<rect x="145.5" y="1095.5" width="104" height="28" fill="#c87838"/>
<rect x="148.2" y="1092.8" width="104.3" height="27.5" fill="#e9d5c5" stroke="#000" stroke-width="1.8"/>
<g fill="#000">
<rect x="153" y="1097" width="15" height="1.2"/><rect x="153" y="1099.5" width="15" height="1.2"/>
<rect x="153" y="1102" width="15" height="1.8"/><rect x="153" y="1104.8" width="15" height="1.2"/>
<rect x="153" y="1107" width="15" height="1.8"/><rect x="153" y="1110" width="15" height="1.2"/>
<rect x="153" y="1112.5" width="15" height="1.2"/><rect x="153" y="1114.5" width="15" height="1.2"/>
</g>
<path d="M212 1122 Q240 1126 262 1124 L278 1118 L268 1122 L276 1111 L266 1113 L274 1100 L262 1104 L271 1090 L250 1100 L225 1104 Z" fill="#c87838"/>
<g fill="#e8e2e2" stroke="#000" stroke-width="1.4" stroke-linejoin="round">
<path d="M220 1110 Q240 1098 262 1094 Q270 1090 272 1088 Q268 1097 258 1100 Q240 1106 222 1115 Z"/>
<path d="M221 1113 Q245 1102 266 1099 L273.5 1097.5 Q266 1104 252 1106 Q236 1111 223 1118 Z"/>
<path d="M222 1116 Q246 1108 268 1108 L275 1108.5 Q264 1113 248 1114 Q234 1117 223 1120 Z"/>
<path d="M223 1118 Q248 1114 270 1115 L278 1116.5 Q262 1120 246 1121 Q234 1122 224 1123 Z"/>
<path d="M222 1121 Q246 1120 262 1120 L271 1120 Q258 1125 240 1126 Q230 1127 222 1126 Z"/>
</g>
<path d="M217 1110 Q224 1106 229 1110 Q233 1116 229 1124 Q222 1128 218 1124 Z" fill="#e8e2e2" stroke="#000" stroke-width="1.4"/>
<path d="M232 1113 Q235 1104 232 1100 Q228 1098 228 1103 Q229 1106 232 1104" fill="none" stroke="#000" stroke-width="1.3"/>
<path d="M180 1136 Q196 1124 220 1124 Q222 1132 214 1136 Z" fill="#f6cca8" stroke="#000" stroke-width="1.3"/>
<path d="M186 1134 Q200 1128 214 1128" fill="none" stroke="#000" stroke-width="0.8"/>
<path d="M174 1115 Q178 1107 200 1107.5 Q214 1108 218 1113 Q210 1117 190 1118 Q176 1118 174 1115 Z" fill="#f6e47a" stroke="#000" stroke-width="1.3"/>
<ellipse cx="197.5" cy="1121" rx="24.5" ry="6.8" transform="rotate(-5 197.5 1121)" fill="#e86c70" stroke="#000" stroke-width="1.6"/>
<path d="M180 1122 Q197 1117 214 1117 M182 1125 Q198 1121 216 1120" fill="none" stroke="#000" stroke-width="1"/>
</g>
</svg>

<div style="position:absolute;left:290px;top:186px;width:1201px;height:800px;background:#d4d0c8;box-shadow:inset 1px 1px 0 #e8e6e2, inset 3px 3px 0 #fff, inset -2px 0 0 #404040, inset -3px 0 0 #808080"></div>
<div style="position:absolute;left:296px;top:192px;width:1189px;height:24px;background:linear-gradient(90deg,#0a246a 0%,#a6caf0 100%)"></div>
<svg style="position:absolute;left:301px;top:197px" width="22" height="16" viewBox="0 0 22 16"><path d="M2 2 L7 2 L8 4 L15 4 L16 6 L16 14 L2 14 Z" fill="#fff" stroke="#000" stroke-width="1.6"/><path d="M3 2.5 L7 2.5 L8 4.5 L15 5" stroke="#20d0d0" stroke-width="1.6" fill="none"/><path d="M17 11 L21 11 L18 15 Z" fill="#8090a8"/></svg>
<div class="t" style="left:327.0px;top:195.11px;font-size:17px;color:#fff;font-weight:700;transform:scale(1.0494,1.0);">Hệ thống quản lý học sinh</div>
<div style="position:absolute;left:1407px;top:194.5px;width:22px;height:19.0px;background:#d4d0c8;box-shadow:inset 1.5px 1.5px 0 #fff, inset -1.5px -1.5px 0 #202020, inset -3px -3px 0 #808080;"></div>
<div style="position:absolute;left:1430.5px;top:194.5px;width:23.5px;height:19.0px;background:#d4d0c8;box-shadow:inset 1.5px 1.5px 0 #fff, inset -1.5px -1.5px 0 #202020, inset -3px -3px 0 #808080;"></div>
<div style="position:absolute;left:1457.5px;top:194.5px;width:24.0px;height:19.0px;background:#d4d0c8;box-shadow:inset 1.5px 1.5px 0 #fff, inset -1.5px -1.5px 0 #202020, inset -3px -3px 0 #808080;"></div>
<div style="position:absolute;left:1413px;top:205.5px;width:9px;height:2.5px;background:#000"></div>
<div style="position:absolute;left:1435px;top:197.5px;width:13px;height:11.5px;border:1.6px solid #000;border-top-width:2.8px;box-sizing:border-box"></div>
<svg style="position:absolute;left:1461px;top:197px" width="16" height="13" viewBox="0 0 16 13"><path d="M2.5 1.5 L13.5 11.5 M13.5 1.5 L2.5 11.5" stroke="#000" stroke-width="2"/></svg>
<div style="position:absolute;left:296px;top:217px;width:1189px;height:36px;box-shadow:inset 1.5px 1.5px 0 #fff, inset -1px -1.5px 0 #9a9894"></div>
<div class="t" style="left:308.0px;top:227.06px;font-size:18px;color:#8c8a86;transform:scale(1.1048,1.0);text-shadow:1px 1px 0 #fff;">Tổ chức</div>
<div class="t" style="left:400.0px;top:227.06px;font-size:18px;color:#8c8a86;transform:scale(1.0959,1.0);text-shadow:1px 1px 0 #fff;">Quản lý</div>
<div class="t" style="left:485.0px;top:227.06px;font-size:18px;color:#8c8a86;transform:scale(1.1504,1.0);text-shadow:1px 1px 0 #fff;">Báo cáo</div>
<div class="t" style="left:579.0px;top:227.06px;font-size:18px;color:#8c8a86;transform:scale(1.1018,1.0);text-shadow:1px 1px 0 #fff;">Hệ thống</div>
<div class="t" style="left:679.0px;top:227.06px;font-size:18px;color:#8c8a86;transform:scale(1.0957,1.0);text-shadow:1px 1px 0 #fff;">Trợ giúp</div>
<div class="t" style="left:772.0px;top:227.06px;font-size:18px;color:#8c8a86;transform:scale(1.1514,1.0);text-shadow:1px 1px 0 #fff;">Thoát</div>
<div style="position:absolute;left:338px;top:244.5px;width:11px;height:1.5px;background:#8c8a86;box-shadow:1px 1px 0 #fff"></div>
<div style="position:absolute;left:400px;top:244.5px;width:13px;height:1.5px;background:#8c8a86;box-shadow:1px 1px 0 #fff"></div>
<div style="position:absolute;left:485px;top:244.5px;width:12px;height:1.5px;background:#8c8a86;box-shadow:1px 1px 0 #fff"></div>
<div style="position:absolute;left:579px;top:244.5px;width:13px;height:1.5px;background:#8c8a86;box-shadow:1px 1px 0 #fff"></div>
<div style="position:absolute;left:715.5px;top:244.5px;width:10.0px;height:1.5px;background:#8c8a86;box-shadow:1px 1px 0 #fff"></div>
<div style="position:absolute;left:772px;top:244.5px;width:13px;height:1.5px;background:#8c8a86;box-shadow:1px 1px 0 #fff"></div>
<div class="t" style="left:325.2px;top:273.76px;font-size:18px;color:#000;transform:scale(1.0922,1.0);">Niên khóa:</div>
<div style="position:absolute;left:425px;top:272px;width:180px;height:28.5px;background:#fff;box-shadow:inset 0 0 0 2px #141414"></div>
<div style="position:absolute;left:580px;top:274px;width:23px;height:24.5px;background:#d4d0c8;box-shadow:inset 1.5px 1.5px 0 #fff, inset -2px -2px 0 #303030, inset -3.5px -3.5px 0 #808080"></div>
<svg style="position:absolute;left:584.5px;top:282.75px" width="12" height="7" viewBox="0 0 12 7"><path d="M0.5 0.8 L11 0.8 L5.75 6.3 Z" fill="#000"/></svg>
<div class="t" style="left:441.0px;top:276.26px;font-size:18px;color:#000;transform:scale(1.0338,1.0);">2000-2001</div>
<div style="position:absolute;left:617.0px;top:292.7px;width:2.5px;height:2.0px;background:#000"></div>
<div style="position:absolute;left:625.5px;top:292.7px;width:2.5px;height:2.0px;background:#000"></div>
<div style="position:absolute;left:634.0px;top:292.7px;width:2.5px;height:2.0px;background:#000"></div>
<div class="t" style="left:344.7px;top:313.26px;font-size:18px;color:#000;transform:scale(1.0486,1.0);">Lớp học:</div>
<div style="position:absolute;left:425px;top:311px;width:120px;height:27.600000000000023px;background:#fff;box-shadow:inset 0 0 0 2px #141414"></div>
<div style="position:absolute;left:520px;top:313px;width:23px;height:23.600000000000023px;background:#d4d0c8;box-shadow:inset 1.5px 1.5px 0 #fff, inset -2px -2px 0 #303030, inset -3.5px -3.5px 0 #808080"></div>
<svg style="position:absolute;left:524.5px;top:321.3px" width="12" height="7" viewBox="0 0 12 7"><path d="M0.5 0.8 L11 0.8 L5.75 6.3 Z" fill="#000"/></svg>
<div class="t" style="left:441.8px;top:314.46px;font-size:18px;color:#000;transform:scale(0.8487,1.0);">1</div>
<div style="position:absolute;left:554.0px;top:330px;width:2.5px;height:2px;background:#000"></div>
<div style="position:absolute;left:562.5px;top:330px;width:2.5px;height:2px;background:#000"></div>
<div style="position:absolute;left:571.0px;top:330px;width:2.5px;height:2px;background:#000"></div>
<div class="t" style="left:307.0px;top:356.96px;font-size:18px;color:#000;transform:scale(1.0833,1.0);">Danh sách hoc sinh:</div>
<div style="position:absolute;left:307px;top:373.8px;width:177px;height:1.6999999999999886px;background:#000"></div>
<div style="position:absolute;left:620.6px;top:343.6px;width:41.39999999999998px;height:34.099999999999966px;background:#d4d0c8;box-shadow:inset 1.5px 1.5px 0 #fff, inset -1.5px -1.5px 0 #202020, inset -3px -3px 0 #808080;box-shadow:inset 2px 2px 0 #fff, inset -2px -2px 0 #303030, inset -3.5px -3.5px 0 #808080"></div>
<svg style="position:absolute;left:625px;top:348px" width="31" height="26" viewBox="0 0 31 26"><path d="M2 2 L25 2 L29 6 L29 24 L2 24 Z" fill="#eef6e0" stroke="#111" stroke-width="2.2"/><path d="M8 12 Q10 6 17 7 L16 4 L22 9 L15 13 L16 10 Q11 10 10 14 Z" fill="#2a8a2a"/><path d="M23 14 Q21 20 14 19 L15 22 L9 17 L16 13 L15 16 Q20 16 21 12 Z" fill="#2a8a2a"/></svg>
<div class="t" style="left:317.8px;top:386.46px;font-size:18px;color:#e040e8;transform:scale(1.0848,1.0);">Tổng số HS: 1 – 1 Nữ</div>
<div style="position:absolute;left:301.6px;top:416.7px;width:359.4px;height:553.3px;background:#fff;box-shadow:inset 2px 2px 0 #3c3c3c, inset -1.5px -1.5px 0 #f4f4f4"></div>
<div style="position:absolute;left:303.6px;top:419.5px;width:355.4px;height:26.5px;background:linear-gradient(180deg,#f6e6c4,#f3e6cc)"></div>
<div style="position:absolute;left:303.6px;top:446.5px;width:355.4px;height:25.5px;background:#b9d1f1"></div>
<div style="position:absolute;left:303.6px;top:472.5px;width:355.4px;height:26.5px;background:#3a6ea5"></div>
<div style="position:absolute;left:303.6px;top:499px;width:355.4px;height:447px;background:linear-gradient(180deg,#ffffff 0%,#f4f7fa 15%,#dfe6ef 45%,#bfcfe2 75%,#94b0d2 100%)"></div>
<div style="position:absolute;left:303.6px;top:445.5px;width:355.4px;height:1.5px;background:#7c7c7c"></div>
<div style="position:absolute;left:303.6px;top:471.5px;width:355.4px;height:1.5px;background:#7c7c7c"></div>
<div style="position:absolute;left:303.6px;top:498.5px;width:355.4px;height:1.5px;background:#7c7c7c"></div>
<div style="position:absolute;left:303.6px;top:418.5px;width:355.4px;height:1.5px;background:#3c3c3c"></div>
<div style="position:absolute;left:435.3px;top:419.5px;width:1.5px;height:79.5px;background:#7c7c7c"></div>
<div style="position:absolute;left:582.3px;top:419.5px;width:1.5px;height:79.5px;background:#7c7c7c"></div>
<div class="t" style="left:318.9px;top:422.11px;font-size:19px;color:#1c1c6c;transform:scale(1.0493,1.0);">Số danh bộ</div>
<div class="t" style="left:481.0px;top:422.11px;font-size:19px;color:#1c1c6c;transform:scale(1.0452,1.0);">Họ HS</div>
<div style="position:absolute;left:584px;top:419px;width:75px;height:27px;overflow:hidden">
<div class="t" style="left:9.2px;top:3.11px;font-size:19px;color:#1c1c6c;transform:scale(1.1952,1.0);">Tên HS</div>
</div>
<div class="t" style="left:308.0px;top:477.36px;font-size:18px;color:#fff;transform:scale(0.9772,1.0);">AK0001</div>
<div class="t" style="left:440.5px;top:477.36px;font-size:18px;color:#fff;transform:scale(1.0263,1.0);">Phan Thi Anh</div>
<div class="t" style="left:587.5px;top:477.36px;font-size:18px;color:#fff;transform:scale(0.9796,1.0);">Khanh</div>
<div style="position:absolute;left:303.6px;top:946px;width:355.4px;height:22px;background:repeating-conic-gradient(#f6f5f3 0 25%,#dedbd5 0 50%) 0 0/2px 2px"></div>
<div style="position:absolute;left:303.6px;top:946px;width:22.899999999999977px;height:22px;background:#d4d0c8;box-shadow:inset 1.8px 1.8px 0 #fff, inset -1.8px -1.8px 0 #505050"></div>
<div style="position:absolute;left:327px;top:946px;width:20px;height:22px;background:#d4d0c8;box-shadow:inset 1.8px 1.8px 0 #fff, inset -1.8px -1.8px 0 #505050"></div>
<div style="position:absolute;left:635px;top:946px;width:24px;height:22px;background:#d4d0c8;box-shadow:inset 1.8px 1.8px 0 #fff, inset -1.8px -1.8px 0 #505050"></div>
<svg style="position:absolute;left:309px;top:950px" width="10" height="13" viewBox="0 0 10 13"><path d="M8 1 L8 12 L2 6.5 Z" fill="#000"/></svg>
<svg style="position:absolute;left:642px;top:950px" width="10" height="13" viewBox="0 0 10 13"><path d="M2 1 L2 12 L8 6.5 Z" fill="#000"/></svg>
<div style="position:absolute;left:672.4px;top:286px;width:812.1px;height:629px;background:#d4d0c8;box-shadow:inset 1.6px 0 0 #1a1a1a, inset 4.6px 1.5px 0 #fff, inset -1.5px -1.5px 0 #000, inset -3.5px -3.5px 0 #808080"></div>
<svg style="position:absolute;left:875.5px;top:256px" width="202.5" height="31" viewBox="0 0 202.5 31"><path d="M1 30 L1 6 L5.5 1 L196.5 1 L201.5 6 L201.5 30" fill="#d4d0c8" stroke="#000" stroke-width="1.6"/><path d="M2.5 29 L2.5 6.5 L6 2.6 L195.5 2.6" fill="none" stroke="#fff" stroke-width="1.6"/><path d="M199.5 6.5 L199.5 29" stroke="#808080" stroke-width="1.6"/><path d="M0 29.5 L202.5 29.5" stroke="#fff" stroke-width="1.6"/></svg>
<svg style="position:absolute;left:1078px;top:256px" width="204" height="31" viewBox="0 0 204 31"><path d="M1 30 L1 6 L5.5 1 L198 1 L203 6 L203 30" fill="#d4d0c8" stroke="#000" stroke-width="1.6"/><path d="M2.5 29 L2.5 6.5 L6 2.6 L197 2.6" fill="none" stroke="#fff" stroke-width="1.6"/><path d="M201 6.5 L201 29" stroke="#808080" stroke-width="1.6"/><path d="M0 29.5 L204 29.5" stroke="#fff" stroke-width="1.6"/></svg>
<svg style="position:absolute;left:1282px;top:256px" width="202.5" height="31" viewBox="0 0 202.5 31"><path d="M1 30 L1 6 L5.5 1 L196.5 1 L201.5 6 L201.5 30" fill="#d4d0c8" stroke="#000" stroke-width="1.6"/><path d="M2.5 29 L2.5 6.5 L6 2.6 L195.5 2.6" fill="none" stroke="#fff" stroke-width="1.6"/><path d="M199.5 6.5 L199.5 29" stroke="#808080" stroke-width="1.6"/><path d="M0 29.5 L202.5 29.5" stroke="#fff" stroke-width="1.6"/></svg>
<svg style="position:absolute;left:672px;top:255.5px" width="205" height="44" viewBox="0 0 205 44"><path d="M1.2 44 L1.2 7 L7 1.2 L197.5 1.2 L201.5 5.5 L201.5 32" fill="#d4d0c8" stroke="#000" stroke-width="1.6"/><path d="M3.3 44 L3.3 7.5 L7.5 3 L197 3" fill="none" stroke="#fff" stroke-width="2.2"/><path d="M200 6 L200 32" stroke="#808080" stroke-width="1.8"/></svg>
<div class="t" style="left:731.8px;top:262.16px;font-size:18px;color:#000;font-weight:700;transform:scale(1.1984,1.0);">Cá Nhân</div>
<div style="position:absolute;left:729px;top:262px;width:93.5px;height:21.5px;border:1.4px dotted #000;box-sizing:border-box"></div>
<div class="t" style="left:940.7px;top:262.76px;font-size:18px;color:#000;transform:scale(1.1447,1.0);">Học Tập</div>
<div class="t" style="left:1125.0px;top:262.76px;font-size:18px;color:#000;transform:scale(1.0365,1.0);">Khen thưởng</div>
<div class="t" style="left:1353.4px;top:262.76px;font-size:18px;color:#000;transform:scale(1.0830,1.0);">Kỷ luật</div>
<div style="position:absolute;left:688px;top:299px;width:778px;height:173px;box-shadow:inset 1.5px 1.5px 0 #8a8884, inset 3px 3px 0 #fff, 1.5px 1.5px 0 #fff, inset -1.5px -1.5px 0 #8a8884"></div>
<div class="t" style="left:712.2px;top:317.76px;font-size:18px;color:#e02a2a;transform:scale(1.0823,1.0);">Họ và tên:</div>
<div style="position:absolute;left:826px;top:313.4px;width:203.4000000000001px;height:28.0px;background:#fff;box-shadow:inset 0 0 0 2px #141414"></div>
<div class="t" style="left:841.5px;top:317.76px;font-size:18px;color:#000;transform:scale(1.0300,1.0);">Phan Thi Anh</div>
<div style="position:absolute;left:1033.4px;top:313px;width:78.59999999999991px;height:28px;background:#fff;box-shadow:inset 0 0 0 2px #141414"></div>
<div class="t" style="left:1048.7px;top:317.26px;font-size:18px;color:#000;transform:scale(0.9700,1.0);">Khanh</div>
<div class="t" style="left:1152.4px;top:317.26px;font-size:18px;color:#e02a2a;transform:scale(0.9807,1.0);">Giới tính:</div>
<div style="position:absolute;left:1228px;top:313px;width:83.59999999999991px;height:28px;background:#fff;box-shadow:inset 0 0 0 2px #141414"></div>
<div style="position:absolute;left:1286.6px;top:315px;width:23.0px;height:24px;background:#d4d0c8;box-shadow:inset 1.5px 1.5px 0 #fff, inset -2px -2px 0 #303030, inset -3.5px -3.5px 0 #808080"></div>
<svg style="position:absolute;left:1291.1px;top:323.5px" width="12" height="7" viewBox="0 0 12 7"><path d="M0.5 0.8 L11 0.8 L5.75 6.3 Z" fill="#000"/></svg>
<div class="t" style="left:1243.9px;top:317.26px;font-size:18px;color:#000;transform:scale(1.1358,1.0);">N÷</div>
<div class="t" style="left:712.0px;top:356.96px;font-size:18px;color:#000;transform:scale(1.0935,1.0);">Ngày sinh:</div>
<div style="position:absolute;left:826px;top:353px;width:112px;height:26.5px;background:#fff;box-shadow:inset 0 0 0 2px #141414"></div>
<div class="t" style="left:841.5px;top:356.96px;font-size:18px;color:#000;transform:scale(1.0927,1.0);">02/09/197</div>
<div class="t" style="left:1039.7px;top:357.16px;font-size:18px;color:#000;transform:scale(1.0372,1.0);">Nơi sinh:</div>
<div style="position:absolute;left:1133.3px;top:352.8px;width:176.70000000000005px;height:28.69999999999999px;background:#fff;box-shadow:inset 0 0 0 2px #141414"></div>
<div class="t" style="left:1150.5px;top:357.16px;font-size:18px;color:#000;transform:scale(0.9614,1.0);">Đà Lạt</div>
<div class="t" style="left:712.0px;top:394.56px;font-size:18px;color:#000;transform:scale(1.0406,1.0);">Diện ưu tiên:</div>
<div style="position:absolute;left:826px;top:391px;width:166px;height:28.69999999999999px;background:#fff;box-shadow:inset 0 0 0 2px #141414"></div>
<div style="position:absolute;left:967px;top:393px;width:23px;height:24.69999999999999px;background:#d4d0c8;box-shadow:inset 1.5px 1.5px 0 #fff, inset -2px -2px 0 #303030, inset -3.5px -3.5px 0 #808080"></div>
<svg style="position:absolute;left:971.5px;top:401.85px" width="12" height="7" viewBox="0 0 12 7"><path d="M0.5 0.8 L11 0.8 L5.75 6.3 Z" fill="#000"/></svg>
<div style="position:absolute;left:828px;top:393px;width:136px;height:25px;overflow:hidden">
<div class="t" style="left:13.5px;top:1.76px;font-size:18px;color:#000;">Con thương binh</div>
</div>
<div class="t" style="left:1039.7px;top:394.86px;font-size:18px;color:#000;transform:scale(1.0645,1.0);">Quê quán:</div>
<div style="position:absolute;left:1133.3px;top:391px;width:176.70000000000005px;height:28.69999999999999px;background:#fff;box-shadow:inset 0 0 0 2px #141414"></div>
<div style="position:absolute;left:1285px;top:393px;width:23px;height:24.69999999999999px;background:#d4d0c8;box-shadow:inset 1.5px 1.5px 0 #fff, inset -2px -2px 0 #303030, inset -3.5px -3.5px 0 #808080"></div>
<svg style="position:absolute;left:1289.5px;top:401.85px" width="12" height="7" viewBox="0 0 12 7"><path d="M0.5 0.8 L11 0.8 L5.75 6.3 Z" fill="#000"/></svg>
<div class="t" style="left:1150.5px;top:394.86px;font-size:18px;color:#000;transform:scale(0.9662,1.0);">TP Hồ Chí Minh</div>
<div class="t" style="left:712.0px;top:435.76px;font-size:18px;color:#000;transform:scale(1.0858,1.0);">Dân tộc:</div>
<div style="position:absolute;left:826px;top:432px;width:166px;height:28px;background:#fff;box-shadow:inset 0 0 0 2px #141414"></div>
<div style="position:absolute;left:967px;top:434px;width:23px;height:24px;background:#d4d0c8;box-shadow:inset 1.5px 1.5px 0 #fff, inset -2px -2px 0 #303030, inset -3.5px -3.5px 0 #808080"></div>
<svg style="position:absolute;left:971.5px;top:442.5px" width="12" height="7" viewBox="0 0 12 7"><path d="M0.5 0.8 L11 0.8 L5.75 6.3 Z" fill="#000"/></svg>
<div class="t" style="left:841.5px;top:436.26px;font-size:18px;color:#000;transform:scale(0.9476,1.0);">Hoa</div>
<div class="t" style="left:1039.7px;top:435.06px;font-size:18px;color:#000;transform:scale(1.1191,1.0);">Tôn giáo:</div>
<div style="position:absolute;left:1133.3px;top:430.6px;width:176.70000000000005px;height:28.399999999999977px;background:#fff;box-shadow:inset 0 0 0 2px #141414"></div>
<div style="position:absolute;left:1285px;top:432.6px;width:23px;height:24.399999999999977px;background:#d4d0c8;box-shadow:inset 1.5px 1.5px 0 #fff, inset -2px -2px 0 #303030, inset -3.5px -3.5px 0 #808080"></div>
<svg style="position:absolute;left:1289.5px;top:441.3px" width="12" height="7" viewBox="0 0 12 7"><path d="M0.5 0.8 L11 0.8 L5.75 6.3 Z" fill="#000"/></svg>
<div class="t" style="left:1150.5px;top:435.06px;font-size:18px;color:#000;transform:scale(1.0071,1.0);">Thiên chúa giáo</div>
<div style="position:absolute;left:1324.5px;top:311px;width:130.0px;height:147.5px;box-shadow:inset 1.5px 1.5px 0 #505050, inset -1.5px -1.5px 0 #fff"></div>
<svg style="position:absolute;left:1326px;top:312.5px" width="87" height="145" viewBox="0 0 87 145">
<defs>
<linearGradient id="pbg" x1="0" y1="0" x2="0" y2="1">
<stop offset="0" stop-color="#241c40"/><stop offset="0.12" stop-color="#302858"/><stop offset="0.3" stop-color="#241c3c"/><stop offset="0.5" stop-color="#141020"/><stop offset="0.68" stop-color="#060408"/><stop offset="1" stop-color="#0a080c"/>
</linearGradient>
<radialGradient id="psky" cx="0.85" cy="0.1" r="0.38"><stop offset="0" stop-color="#6454c0" stop-opacity="0.9"/><stop offset="0.6" stop-color="#40348a" stop-opacity="0.45"/><stop offset="1" stop-color="#201838" stop-opacity="0"/></radialGradient>
<radialGradient id="sph" cx="0.4" cy="0.35" r="0.65"><stop offset="0" stop-color="#f0f0fa"/><stop offset="0.45" stop-color="#9088a8"/><stop offset="1" stop-color="#1a1428"/></radialGradient>
<filter id="pbl" x="0" y="0" width="1" height="1"><feGaussianBlur stdDeviation="0.6"/></filter>
<filter id="gbl" x="-1" y="-1" width="3" height="3"><feGaussianBlur stdDeviation="2.5"/></filter>
<clipPath id="tw"><path d="M2 103 L4 60 L12 20 L22 10 L30 12 L40 40 L52 70 L70 100 L45 104 Z"/></clipPath>
</defs>
<g filter="url(#pbl)">
<rect width="87" height="145" fill="url(#pbg)"/>
<rect width="87" height="145" fill="url(#psky)"/>
<path d="M35 45 Q60 40 87 47 L87 55 Q60 50 35 57 Z" fill="#5a4a80" opacity="0.3"/>
<path d="M2 103 L4 60 L12 20 L22 10 L30 12 L40 40 L52 70 L70 100 L45 104 Z" fill="#4a4858"/>
<g clip-path="url(#tw)">
<rect x="31.7" y="62.3" width="1.5" height="1.5" fill="#2a2a34"/>
<rect x="35.5" y="65.0" width="2" height="1.5" fill="#9898a8"/>
<rect x="44.1" y="84.9" width="1.5" height="1.5" fill="#b8b8c8"/>
<rect x="9.9" y="60.3" width="2" height="1" fill="#101018"/>
<rect x="41.7" y="46.4" width="2" height="2" fill="#707080"/>
<rect x="43.1" y="23.3" width="2" height="1" fill="#b8b8c8"/>
<rect x="4.2" y="26.5" width="2" height="1" fill="#9898a8"/>
<rect x="54.5" y="39.7" width="1" height="2" fill="#202028"/>
<rect x="16.4" y="36.5" width="2" height="1" fill="#b8b8c8"/>
<rect x="32.0" y="35.0" width="1" height="2" fill="#202028"/>
<rect x="17.8" y="81.5" width="1.5" height="1" fill="#202028"/>
<rect x="4.9" y="82.3" width="1" height="1.5" fill="#707080"/>
<rect x="27.1" y="100.9" width="2" height="1" fill="#2a2a34"/>
<rect x="14.9" y="97.9" width="1.5" height="1.5" fill="#b8b8c8"/>
<rect x="68.6" y="46.6" width="2" height="2" fill="#b8b8c8"/>
<rect x="13.9" y="73.5" width="1" height="1.5" fill="#d0d0dc"/>
<rect x="23.3" y="101.5" width="1" height="1" fill="#2a2a34"/>
<rect x="17.2" y="17.8" width="1.5" height="1.5" fill="#b8b8c8"/>
<rect x="12.4" y="62.3" width="2" height="1" fill="#707080"/>
<rect x="69.0" y="82.6" width="2" height="1.5" fill="#707080"/>
<rect x="8.2" y="48.8" width="1" height="1.5" fill="#9898a8"/>
<rect x="60.5" y="102.6" width="1.5" height="1" fill="#202028"/>
<rect x="14.7" y="46.2" width="2" height="2" fill="#2a2a34"/>
<rect x="40.4" y="12.1" width="1" height="1.5" fill="#9898a8"/>
<rect x="18.1" y="83.0" width="1.5" height="1.5" fill="#d0d0dc"/>
<rect x="5.1" y="16.7" width="2" height="1" fill="#202028"/>
<rect x="1.1" y="43.8" width="1.5" height="1" fill="#202028"/>
<rect x="67.1" y="54.9" width="1" height="1.5" fill="#202028"/>
<rect x="12.8" y="23.0" width="2" height="1" fill="#9898a8"/>
<rect x="50.8" y="23.4" width="2" height="1" fill="#101018"/>
<rect x="48.1" y="45.7" width="2" height="1" fill="#707080"/>
<rect x="29.5" y="18.1" width="2" height="1.5" fill="#b8b8c8"/>
<rect x="16.7" y="76.3" width="1.5" height="2" fill="#d0d0dc"/>
<rect x="34.4" y="58.4" width="1" height="1" fill="#101018"/>
<rect x="16.0" y="62.3" width="2" height="2" fill="#2a2a34"/>
<rect x="5.2" y="28.6" width="2" height="1" fill="#9898a8"/>
<rect x="4.8" y="47.9" width="1" height="1" fill="#9898a8"/>
<rect x="12.3" y="43.8" width="1" height="1" fill="#202028"/>
<rect x="25.4" y="94.4" width="2" height="2" fill="#d0d0dc"/>
<rect x="48.4" y="64.7" width="2" height="1" fill="#9898a8"/>
<rect x="64.7" y="54.1" width="2" height="1.5" fill="#d0d0dc"/>
<rect x="67.4" y="10.1" width="1" height="1.5" fill="#101018"/>
<rect x="4.7" y="38.2" width="1" height="1" fill="#9898a8"/>
<rect x="31.7" y="43.7" width="2" height="2" fill="#b8b8c8"/>
<rect x="49.3" y="84.9" width="1.5" height="1" fill="#d0d0dc"/>
<rect x="48.0" y="95.4" width="1.5" height="1" fill="#2a2a34"/>
<rect x="60.4" y="63.6" width="2" height="1.5" fill="#202028"/>
<rect x="26.5" y="9.2" width="1" height="1" fill="#b8b8c8"/>
<rect x="44.8" y="104.4" width="2" height="1.5" fill="#707080"/>
<rect x="27.2" y="79.3" width="1.5" height="1.5" fill="#202028"/>
<rect x="32.4" y="60.5" width="2" height="1" fill="#202028"/>
<rect x="21.7" y="16.5" width="1" height="2" fill="#b8b8c8"/>
<rect x="7.9" y="83.7" width="1.5" height="1.5" fill="#101018"/>
<rect x="62.7" y="43.7" width="2" height="2" fill="#9898a8"/>
<rect x="14.2" y="24.5" width="2" height="1.5" fill="#d0d0dc"/>
<rect x="34.9" y="31.4" width="2" height="1.5" fill="#707080"/>
<rect x="13.9" y="49.8" width="1" height="1" fill="#2a2a34"/>
<rect x="26.9" y="64.6" width="1" height="1" fill="#d0d0dc"/>
<rect x="9.4" y="42.0" width="1" height="2" fill="#2a2a34"/>
<rect x="4.5" y="103.1" width="1" height="1" fill="#2a2a34"/>
<rect x="31.5" y="34.7" width="1.5" height="1.5" fill="#9898a8"/>
<rect x="43.8" y="55.9" width="2" height="2" fill="#d0d0dc"/>
<rect x="31.7" y="15.2" width="1.5" height="2" fill="#b8b8c8"/>
<rect x="2.9" y="76.7" width="1.5" height="1.5" fill="#202028"/>
<rect x="45.5" y="62.7" width="1" height="1.5" fill="#101018"/>
<rect x="31.8" y="10.4" width="1.5" height="1" fill="#2a2a34"/>
<rect x="54.5" y="85.3" width="1" height="1.5" fill="#101018"/>
<rect x="7.6" y="59.9" width="1.5" height="1" fill="#101018"/>
<rect x="47.9" y="27.3" width="1.5" height="1" fill="#707080"/>
<rect x="50.0" y="81.2" width="2" height="1" fill="#202028"/>
<rect x="12.5" y="34.4" width="2" height="2" fill="#d0d0dc"/>
<rect x="66.3" y="56.5" width="1" height="1.5" fill="#2a2a34"/>
<rect x="59.4" y="75.9" width="1" height="1.5" fill="#9898a8"/>
<rect x="65.3" y="78.1" width="1.5" height="1.5" fill="#9898a8"/>
<rect x="13.8" y="94.1" width="1.5" height="2" fill="#b8b8c8"/>
<rect x="39.8" y="93.3" width="1.5" height="1.5" fill="#2a2a34"/>
<rect x="22.9" y="103.3" width="2" height="2" fill="#b8b8c8"/>
<rect x="64.7" y="20.0" width="1.5" height="1" fill="#9898a8"/>
<rect x="68.4" y="60.1" width="1.5" height="1.5" fill="#2a2a34"/>
<rect x="63.7" y="91.0" width="2" height="1" fill="#d0d0dc"/>
<rect x="2.6" y="41.2" width="1.5" height="1.5" fill="#707080"/>
<rect x="64.4" y="29.2" width="1" height="1.5" fill="#2a2a34"/>
<rect x="56.0" y="24.8" width="2" height="1" fill="#d0d0dc"/>
<rect x="32.9" y="105.0" width="2" height="2" fill="#101018"/>
<rect x="48.3" y="99.7" width="2" height="2" fill="#707080"/>
<rect x="6.0" y="29.5" width="2" height="1.5" fill="#202028"/>
<rect x="58.2" y="62.5" width="2" height="2" fill="#9898a8"/>
<rect x="59.1" y="62.3" width="2" height="1.5" fill="#d0d0dc"/>
<rect x="66.8" y="92.4" width="1" height="1.5" fill="#202028"/>
<rect x="59.6" y="101.9" width="1.5" height="2" fill="#202028"/>
<rect x="34.8" y="47.9" width="2" height="1" fill="#b8b8c8"/>
<rect x="42.4" y="10.7" width="2" height="1.5" fill="#b8b8c8"/>
<rect x="38.1" y="104.0" width="1.5" height="1" fill="#b8b8c8"/>
<rect x="48.4" y="14.4" width="1.5" height="1.5" fill="#202028"/>
<rect x="64.5" y="85.6" width="1.5" height="1" fill="#707080"/>
<rect x="33.1" y="20.3" width="1.5" height="2" fill="#707080"/>
<rect x="22.2" y="26.6" width="1" height="1.5" fill="#202028"/>
<rect x="9.1" y="83.6" width="1" height="1" fill="#b8b8c8"/>
<rect x="10.9" y="9.1" width="1.5" height="2" fill="#d0d0dc"/>
<rect x="24.9" y="68.1" width="1.5" height="2" fill="#b8b8c8"/>
<rect x="40.8" y="90.6" width="1.5" height="2" fill="#202028"/>
<rect x="13.8" y="59.4" width="1" height="1.5" fill="#707080"/>
<rect x="44.3" y="88.0" width="1" height="2" fill="#202028"/>
<rect x="14.3" y="69.2" width="1" height="2" fill="#101018"/>
<rect x="15.1" y="60.7" width="1" height="1" fill="#202028"/>
<rect x="64.0" y="68.9" width="1" height="1.5" fill="#d0d0dc"/>
<rect x="42.2" y="94.4" width="1" height="1" fill="#9898a8"/>
<rect x="62.1" y="21.0" width="1" height="2" fill="#9898a8"/>
<rect x="6.2" y="45.6" width="1.5" height="2" fill="#707080"/>
<rect x="55.3" y="20.2" width="2" height="2" fill="#707080"/>
<rect x="55.9" y="17.3" width="2" height="1.5" fill="#202028"/>
<rect x="63.8" y="101.9" width="2" height="2" fill="#b8b8c8"/>
<rect x="44.4" y="41.3" width="1" height="1" fill="#101018"/>
<rect x="33.7" y="10.4" width="2" height="2" fill="#2a2a34"/>
<rect x="36.0" y="63.2" width="1" height="1" fill="#9898a8"/>
<rect x="8.0" y="24.7" width="1.5" height="2" fill="#9898a8"/>
<rect x="6.7" y="14.0" width="1.5" height="1" fill="#101018"/>
<rect x="53.5" y="39.7" width="1.5" height="2" fill="#707080"/>
<rect x="24.8" y="28.4" width="1" height="2" fill="#d0d0dc"/>
<rect x="49.1" y="89.9" width="1.5" height="1.5" fill="#9898a8"/>
<rect x="25.2" y="43.9" width="2" height="1" fill="#9898a8"/>
<rect x="6.6" y="84.9" width="1" height="2" fill="#d0d0dc"/>
<rect x="61.3" y="96.1" width="2" height="2" fill="#707080"/>
<rect x="13.4" y="64.7" width="1.5" height="1.5" fill="#d0d0dc"/>
<rect x="63.8" y="80.2" width="1" height="1.5" fill="#2a2a34"/>
<rect x="9.3" y="40.0" width="2" height="1.5" fill="#202028"/>
<rect x="53.7" y="82.2" width="1" height="2" fill="#707080"/>
<rect x="12.9" y="85.3" width="1.5" height="1" fill="#d0d0dc"/>
<rect x="0.7" y="42.5" width="2" height="1" fill="#101018"/>
<rect x="16.2" y="99.6" width="1.5" height="1.5" fill="#101018"/>
<rect x="15.1" y="47.4" width="2" height="1" fill="#9898a8"/>
<rect x="27.3" y="105.0" width="1" height="2" fill="#101018"/>
<rect x="8.4" y="46.4" width="1" height="1" fill="#202028"/>
<rect x="43.1" y="79.7" width="1.5" height="1.5" fill="#d0d0dc"/>
<rect x="35.3" y="81.8" width="1.5" height="1" fill="#101018"/>
<rect x="6.9" y="32.3" width="2" height="2" fill="#d0d0dc"/>
<rect x="35.5" y="101.8" width="1" height="2" fill="#202028"/>
<rect x="31.1" y="70.5" width="2" height="2" fill="#202028"/>
<rect x="53.1" y="12.4" width="1.5" height="1.5" fill="#9898a8"/>
<rect x="67.9" y="91.0" width="2" height="2" fill="#202028"/>
<rect x="4.1" y="99.7" width="1.5" height="2" fill="#707080"/>
<rect x="27.9" y="38.3" width="1.5" height="1.5" fill="#202028"/>
<rect x="45.9" y="62.4" width="2" height="2" fill="#d0d0dc"/>
<rect x="52.3" y="10.6" width="1" height="2" fill="#2a2a34"/>
<rect x="3.0" y="23.2" width="2" height="1.5" fill="#2a2a34"/>
<rect x="3.7" y="38.6" width="1" height="2" fill="#707080"/>
<rect x="69.2" y="99.6" width="1" height="1.5" fill="#b8b8c8"/>
<rect x="50.3" y="32.3" width="1" height="1" fill="#2a2a34"/>
<rect x="36.6" y="98.9" width="1.5" height="1" fill="#101018"/>
<rect x="68.5" y="87.2" width="2" height="1" fill="#202028"/>
<rect x="3.5" y="48.5" width="1" height="1" fill="#b8b8c8"/>
<rect x="25.0" y="23.0" width="1.5" height="1" fill="#d0d0dc"/>
<rect x="46.8" y="52.2" width="2" height="2" fill="#d0d0dc"/>
<rect x="47.7" y="43.3" width="2" height="1" fill="#101018"/>
<rect x="66.7" y="79.2" width="1.5" height="1" fill="#9898a8"/>
<rect x="35.2" y="37.9" width="2" height="1.5" fill="#202028"/>
<rect x="19.2" y="67.2" width="2" height="2" fill="#101018"/>
<rect x="41.4" y="69.4" width="1" height="1" fill="#2a2a34"/>
<rect x="66.6" y="56.7" width="1" height="2" fill="#101018"/>
<rect x="2.8" y="13.9" width="1.5" height="1.5" fill="#d0d0dc"/>
<rect x="1.9" y="11.7" width="2" height="1.5" fill="#9898a8"/>
<rect x="5.1" y="16.4" width="1" height="2" fill="#101018"/>
<rect x="16.4" y="103.2" width="1.5" height="1.5" fill="#707080"/>
<rect x="14.7" y="41.3" width="1" height="1" fill="#101018"/>
<rect x="56.2" y="51.4" width="2" height="1" fill="#2a2a34"/>
<rect x="31.1" y="80.5" width="1" height="1.5" fill="#707080"/>
<rect x="10.7" y="89.1" width="1.5" height="1.5" fill="#202028"/>
<rect x="38.4" y="80.4" width="1.5" height="2" fill="#9898a8"/>
<rect x="25.8" y="17.4" width="1" height="2" fill="#d0d0dc"/>
<rect x="5.8" y="62.7" width="2" height="1.5" fill="#707080"/>
<rect x="20.9" y="83.2" width="1.5" height="1" fill="#b8b8c8"/>
<rect x="63.7" y="66.6" width="1.5" height="1.5" fill="#101018"/>
<rect x="50.7" y="75.3" width="1" height="1" fill="#d0d0dc"/>
<rect x="25.0" y="78.4" width="1" height="1.5" fill="#d0d0dc"/>
<rect x="49.6" y="63.2" width="1.5" height="1.5" fill="#101018"/>
<rect x="37.1" y="104.3" width="1.5" height="1" fill="#707080"/>
<rect x="28.0" y="98.7" width="1" height="1" fill="#202028"/>
<rect x="25.3" y="43.5" width="2" height="1.5" fill="#d0d0dc"/>
<rect x="40.9" y="85.2" width="2" height="1.5" fill="#101018"/>
<rect x="55.8" y="60.4" width="2" height="2" fill="#2a2a34"/>
<rect x="12.4" y="16.7" width="1.5" height="1" fill="#707080"/>
<rect x="15.5" y="13.6" width="2" height="1.5" fill="#9898a8"/>
<rect x="67.6" y="71.2" width="1.5" height="1" fill="#2a2a34"/>
<rect x="40.7" y="37.6" width="1" height="1.5" fill="#202028"/>
<rect x="5.7" y="79.5" width="1" height="1" fill="#d0d0dc"/>
<rect x="44.4" y="22.0" width="2" height="1.5" fill="#101018"/>
<rect x="17.2" y="29.4" width="2" height="1.5" fill="#2a2a34"/>
<rect x="53.5" y="46.3" width="1.5" height="2" fill="#d0d0dc"/>
<rect x="9.6" y="55.3" width="2" height="1" fill="#2a2a34"/>
<rect x="49.6" y="96.8" width="2" height="1.5" fill="#707080"/>
<rect x="59.7" y="86.2" width="1" height="1.5" fill="#2a2a34"/>
<rect x="67.0" y="70.1" width="1.5" height="2" fill="#202028"/>
<rect x="0.7" y="18.7" width="1" height="1" fill="#707080"/>
<rect x="51.9" y="104.1" width="2" height="1" fill="#707080"/>
<rect x="22.5" y="45.8" width="1.5" height="1.5" fill="#202028"/>
<rect x="67.9" y="13.7" width="2" height="1" fill="#d0d0dc"/>
<rect x="21.2" y="23.1" width="1" height="1.5" fill="#9898a8"/>
<rect x="1.2" y="54.7" width="1" height="1.5" fill="#2a2a34"/>
<rect x="7.6" y="25.9" width="2" height="1" fill="#9898a8"/>
<rect x="42.0" y="53.8" width="1" height="1.5" fill="#202028"/>
<rect x="12.9" y="35.3" width="1.5" height="2" fill="#9898a8"/>
<rect x="38.4" y="87.3" width="1.5" height="1.5" fill="#707080"/>
<rect x="62.1" y="96.7" width="2" height="2" fill="#d0d0dc"/>
<rect x="54.0" y="17.0" width="1" height="1.5" fill="#2a2a34"/>
<rect x="3.5" y="99.9" width="1.5" height="2" fill="#2a2a34"/>
<rect x="55.6" y="83.1" width="1" height="2" fill="#2a2a34"/>
<rect x="64.7" y="94.5" width="1.5" height="1.5" fill="#2a2a34"/>
<rect x="31.5" y="31.9" width="2" height="1" fill="#707080"/>
<rect x="29.1" y="82.9" width="1.5" height="2" fill="#9898a8"/>
<rect x="9.2" y="79.9" width="1.5" height="2" fill="#202028"/>
<rect x="37.4" y="22.6" width="1" height="1" fill="#2a2a34"/>
<rect x="14.3" y="96.9" width="1" height="1" fill="#9898a8"/>
<rect x="24.6" y="67.6" width="1" height="1.5" fill="#202028"/>
<rect x="48.6" y="16.0" width="2" height="2" fill="#101018"/>
<rect x="60.0" y="37.4" width="1" height="1.5" fill="#2a2a34"/>
<rect x="13.5" y="74.2" width="1.5" height="1" fill="#2a2a34"/>
<rect x="2.6" y="48.1" width="1" height="1.5" fill="#707080"/>
<rect x="22.1" y="47.3" width="1.5" height="1.5" fill="#202028"/>
<rect x="46.7" y="14.5" width="2" height="1" fill="#b8b8c8"/>
<rect x="7.4" y="46.2" width="2" height="1" fill="#707080"/>
<rect x="45.8" y="9.2" width="2" height="2" fill="#707080"/>
<rect x="33.3" y="36.5" width="1.5" height="1" fill="#b8b8c8"/>
<rect x="59.9" y="89.9" width="1" height="2" fill="#101018"/>
<rect x="10.6" y="68.9" width="2" height="1.5" fill="#202028"/>
<rect x="66.8" y="81.2" width="2" height="1" fill="#202028"/>
<rect x="18.0" y="27.4" width="1" height="1.5" fill="#101018"/>
<rect x="21.7" y="34.6" width="2" height="2" fill="#707080"/>
<rect x="23.2" y="88.2" width="1" height="1" fill="#b8b8c8"/>
<rect x="43.5" y="20.7" width="2" height="1" fill="#101018"/>
<rect x="12.6" y="47.0" width="1.5" height="2" fill="#2a2a34"/>
<rect x="49.3" y="17.7" width="1" height="1" fill="#b8b8c8"/>
<rect x="30.4" y="82.8" width="1.5" height="2" fill="#d0d0dc"/>
<rect x="9.7" y="27.9" width="2" height="1.5" fill="#9898a8"/>
<rect x="33.8" y="97.4" width="1" height="2" fill="#202028"/>
<rect x="28.0" y="75.9" width="1" height="2" fill="#2a2a34"/>
<rect x="69.0" y="59.4" width="1.5" height="1" fill="#d0d0dc"/>
<rect x="24.0" y="71.1" width="2" height="1.5" fill="#b8b8c8"/>
<rect x="14.3" y="40.3" width="1" height="2" fill="#d0d0dc"/>
<rect x="49.9" y="32.6" width="1.5" height="2" fill="#202028"/>
<rect x="16.4" y="67.4" width="1" height="2" fill="#202028"/>
<rect x="49.9" y="103.7" width="2" height="2" fill="#202028"/>
<rect x="58.5" y="27.1" width="2" height="2" fill="#b8b8c8"/>
<rect x="13.9" y="16.1" width="1.5" height="2" fill="#9898a8"/>
<rect x="29.2" y="40.4" width="1.5" height="1.5" fill="#b8b8c8"/>
<rect x="32.4" y="20.0" width="1" height="1" fill="#101018"/>
<rect x="63.3" y="60.7" width="1" height="2" fill="#202028"/>
<rect x="64.1" y="24.3" width="1.5" height="2" fill="#101018"/>
<rect x="10.2" y="98.6" width="1.5" height="2" fill="#b8b8c8"/>
<rect x="62.8" y="31.4" width="1.5" height="1" fill="#202028"/>
<rect x="13.0" y="61.1" width="1.5" height="1" fill="#b8b8c8"/>
<rect x="28.2" y="83.9" width="1" height="1.5" fill="#101018"/>
<rect x="52.9" y="90.2" width="2" height="2" fill="#707080"/>
<rect x="44.8" y="82.0" width="1" height="1.5" fill="#9898a8"/>
<rect x="32.8" y="21.9" width="1" height="2" fill="#707080"/>
<rect x="28.4" y="40.6" width="1.5" height="1" fill="#9898a8"/>
<rect x="39.8" y="40.2" width="1" height="2" fill="#101018"/>
<rect x="47.0" y="22.0" width="2" height="1" fill="#707080"/>
<rect x="32.9" y="47.9" width="2" height="2" fill="#202028"/>
<rect x="53.1" y="80.9" width="1.5" height="2" fill="#707080"/>
<rect x="28.6" y="50.1" width="1" height="2" fill="#202028"/>
<rect x="23.1" y="58.5" width="1" height="1.5" fill="#707080"/>
<rect x="63.5" y="36.7" width="1.5" height="2" fill="#202028"/>
<rect x="26.4" y="39.2" width="1.5" height="2" fill="#2a2a34"/>
<rect x="61.4" y="31.7" width="1.5" height="1" fill="#2a2a34"/>
<rect x="35.2" y="46.5" width="1.5" height="2" fill="#b8b8c8"/>
<rect x="7.4" y="96.3" width="1.5" height="2" fill="#202028"/>
<rect x="27.7" y="30.9" width="2" height="2" fill="#b8b8c8"/>
<rect x="25.8" y="61.0" width="1" height="1" fill="#202028"/>
<rect x="45.5" y="48.9" width="1" height="1" fill="#b8b8c8"/>
<rect x="36.4" y="20.6" width="2" height="1.5" fill="#202028"/>
<rect x="0.0" y="31.7" width="1" height="1.5" fill="#d0d0dc"/>
<rect x="12.0" y="50.8" width="2" height="1.5" fill="#707080"/>
<rect x="9.9" y="75.2" width="1" height="1.5" fill="#9898a8"/>
<rect x="2.2" y="95.2" width="1.5" height="1.5" fill="#d0d0dc"/>
<rect x="10.0" y="83.3" width="1.5" height="1" fill="#2a2a34"/>
<rect x="14.2" y="91.3" width="1" height="1" fill="#101018"/>
<rect x="22.1" y="91.3" width="1" height="1" fill="#707080"/>
<rect x="44.5" y="75.7" width="1" height="2" fill="#202028"/>
<rect x="44.3" y="26.6" width="2" height="1" fill="#b8b8c8"/>
<rect x="21.4" y="87.3" width="1.5" height="2" fill="#d0d0dc"/>
<rect x="61.5" y="40.5" width="1.5" height="1.5" fill="#2a2a34"/>
<rect x="5.5" y="29.7" width="1" height="2" fill="#d0d0dc"/>
<rect x="48.4" y="34.1" width="1" height="2" fill="#101018"/>
<rect x="46.5" y="84.7" width="2" height="2" fill="#d0d0dc"/>
<rect x="61.9" y="65.2" width="1.5" height="1" fill="#9898a8"/>
<rect x="46.7" y="34.9" width="2" height="1" fill="#101018"/>
<rect x="32.4" y="15.4" width="1" height="2" fill="#202028"/>
<rect x="63.5" y="8.7" width="1.5" height="2" fill="#202028"/>
<rect x="17.6" y="85.9" width="1" height="1.5" fill="#b8b8c8"/>
<rect x="69.2" y="26.4" width="1.5" height="2" fill="#9898a8"/>
<rect x="38.4" y="26.1" width="1" height="2" fill="#9898a8"/>
<rect x="32.3" y="80.8" width="1" height="1.5" fill="#707080"/>
<rect x="4.2" y="14.2" width="2" height="1.5" fill="#2a2a34"/>
<rect x="22.5" y="54.9" width="2" height="1.5" fill="#b8b8c8"/>
<rect x="35.4" y="90.0" width="2" height="2" fill="#101018"/>
<rect x="66.6" y="24.9" width="1" height="1" fill="#2a2a34"/>
<rect x="42.6" y="30.8" width="2" height="1.5" fill="#707080"/>
<rect x="55.1" y="84.7" width="1.5" height="1.5" fill="#9898a8"/>
<rect x="38.1" y="90.7" width="1.5" height="1.5" fill="#202028"/>
<rect x="2.5" y="65.9" width="1" height="2" fill="#101018"/>
<rect x="31.4" y="93.4" width="1" height="2" fill="#d0d0dc"/>
<rect x="1.2" y="56.1" width="2" height="1.5" fill="#707080"/>
<rect x="50.6" y="91.1" width="1" height="1" fill="#b8b8c8"/>
<rect x="63.5" y="63.2" width="2" height="2" fill="#202028"/>
<rect x="16.7" y="22.2" width="1.5" height="1" fill="#d0d0dc"/>
<rect x="48.7" y="87.5" width="2" height="1.5" fill="#101018"/>
<rect x="53.6" y="56.3" width="2" height="1" fill="#101018"/>
<rect x="26.5" y="32.1" width="2" height="2" fill="#707080"/>
<rect x="58.2" y="84.3" width="1.5" height="1.5" fill="#b8b8c8"/>
<rect x="32.7" y="75.8" width="1" height="1" fill="#101018"/>
<rect x="34.3" y="81.8" width="1" height="2" fill="#9898a8"/>
<rect x="31.9" y="80.3" width="1" height="1" fill="#b8b8c8"/>
<rect x="28.7" y="59.0" width="1.5" height="2" fill="#b8b8c8"/>
<rect x="20.9" y="49.2" width="1" height="2" fill="#b8b8c8"/>
<rect x="69.7" y="82.0" width="2" height="1" fill="#101018"/>
<rect x="20.7" y="19.5" width="1" height="1.5" fill="#2a2a34"/>
<rect x="32.3" y="98.4" width="1.5" height="1.5" fill="#d0d0dc"/>
<rect x="66.2" y="97.5" width="1" height="1" fill="#9898a8"/>
<rect x="28.2" y="71.0" width="2" height="1.5" fill="#b8b8c8"/>
<rect x="39.7" y="96.5" width="1" height="1.5" fill="#202028"/>
<rect x="60.2" y="98.7" width="1.5" height="1.5" fill="#9898a8"/>
<rect x="54.7" y="28.9" width="1" height="1" fill="#d0d0dc"/>
<rect x="55.5" y="86.0" width="1" height="1.5" fill="#707080"/>
<rect x="15.0" y="53.4" width="1.5" height="1.5" fill="#d0d0dc"/>
<rect x="34.3" y="68.8" width="1.5" height="1" fill="#9898a8"/>
<rect x="37.8" y="48.7" width="2" height="1.5" fill="#b8b8c8"/>
<rect x="25.4" y="34.6" width="2" height="1" fill="#b8b8c8"/>
<rect x="51.9" y="57.7" width="2" height="2" fill="#202028"/>
<rect x="15.2" y="18.0" width="1" height="2" fill="#b8b8c8"/>
<rect x="65.6" y="42.9" width="1" height="2" fill="#2a2a34"/>
<rect x="58.8" y="19.6" width="1.5" height="1.5" fill="#d0d0dc"/>
<rect x="5.8" y="93.6" width="1.5" height="2" fill="#d0d0dc"/>
<rect x="46.8" y="37.3" width="1" height="1.5" fill="#202028"/>
<rect x="2.9" y="22.6" width="1" height="1" fill="#202028"/>
<rect x="14.6" y="47.8" width="2" height="2" fill="#707080"/>
<rect x="9.5" y="76.5" width="1.5" height="2" fill="#d0d0dc"/>
<rect x="31.6" y="44.6" width="1.5" height="2" fill="#9898a8"/>
<rect x="49.9" y="47.3" width="2" height="1.5" fill="#707080"/>
<rect x="15.8" y="36.3" width="2" height="1" fill="#d0d0dc"/>
<rect x="9.8" y="90.3" width="2" height="1.5" fill="#101018"/>
<rect x="39.6" y="86.5" width="1.5" height="2" fill="#101018"/>
<rect x="46.9" y="97.1" width="2" height="2" fill="#9898a8"/>
<rect x="24.7" y="19.8" width="1.5" height="1" fill="#2a2a34"/>
<rect x="54.8" y="33.2" width="1.5" height="1" fill="#2a2a34"/>
<rect x="27.5" y="13.8" width="1.5" height="1.5" fill="#707080"/>
<rect x="34.8" y="35.1" width="1.5" height="1" fill="#9898a8"/>
<rect x="33.3" y="24.2" width="2" height="1" fill="#101018"/>
<rect x="36.4" y="80.0" width="1" height="1.5" fill="#707080"/>
<rect x="40.8" y="76.0" width="1.5" height="2" fill="#202028"/>
<rect x="64.0" y="95.5" width="1.5" height="1" fill="#b8b8c8"/>
<rect x="63.9" y="34.4" width="1.5" height="2" fill="#707080"/>
<rect x="21.0" y="77.8" width="1" height="1" fill="#d0d0dc"/>
<rect x="2.5" y="39.4" width="2" height="1.5" fill="#d0d0dc"/>
<rect x="18.3" y="72.8" width="2" height="1.5" fill="#9898a8"/>
<rect x="26.9" y="41.1" width="1" height="2" fill="#d0d0dc"/>
<rect x="49.5" y="29.0" width="2" height="1" fill="#b8b8c8"/>
<rect x="43.5" y="47.9" width="1" height="1.5" fill="#707080"/>
<rect x="4.8" y="53.0" width="1.5" height="1.5" fill="#707080"/>
<rect x="2.7" y="21.2" width="1.5" height="1.5" fill="#202028"/>
<rect x="34.7" y="53.9" width="1" height="2" fill="#b8b8c8"/>
<rect x="13.5" y="30.2" width="1" height="1" fill="#101018"/>
<rect x="36.4" y="97.9" width="1" height="1" fill="#707080"/>
<rect x="38.3" y="90.4" width="2" height="1" fill="#2a2a34"/>
<rect x="43.7" y="62.4" width="2" height="1.5" fill="#2a2a34"/>
<rect x="18.5" y="18.1" width="1.5" height="2" fill="#b8b8c8"/>
<rect x="14.6" y="46.4" width="1" height="1" fill="#9898a8"/>
<rect x="11.2" y="68.3" width="2" height="1.5" fill="#707080"/>
<rect x="25.9" y="35.7" width="2" height="2" fill="#101018"/>
<rect x="34.9" y="70.7" width="1.5" height="2" fill="#d0d0dc"/>
<rect x="12.4" y="57.8" width="1" height="1" fill="#9898a8"/>
<rect x="57.2" y="93.9" width="1" height="1.5" fill="#d0d0dc"/>
<rect x="35.9" y="73.9" width="1" height="2" fill="#b8b8c8"/>
<rect x="60.6" y="92.4" width="1.5" height="1.5" fill="#b8b8c8"/>
<rect x="27.8" y="79.7" width="1.5" height="1.5" fill="#101018"/>
<rect x="50.1" y="32.4" width="2" height="1.5" fill="#101018"/>
<rect x="12.9" y="91.0" width="2" height="1" fill="#9898a8"/>
<rect x="39.7" y="48.8" width="1" height="2" fill="#101018"/>
<rect x="51.8" y="34.1" width="1" height="1" fill="#9898a8"/>
<rect x="26.4" y="72.9" width="2" height="1" fill="#9898a8"/>
<rect x="68.2" y="53.8" width="1" height="1.5" fill="#101018"/>
<rect x="48.1" y="48.7" width="2" height="1.5" fill="#101018"/>
<rect x="27.1" y="73.9" width="1" height="1" fill="#9898a8"/>
<rect x="49.9" y="19.5" width="1" height="1.5" fill="#b8b8c8"/>
<rect x="25.0" y="60.2" width="1" height="1.5" fill="#2a2a34"/>
<rect x="23.1" y="10.6" width="1.5" height="1" fill="#202028"/>
<rect x="26.1" y="38.0" width="2" height="1.5" fill="#2a2a34"/>
<rect x="15.7" y="78.0" width="1" height="2" fill="#707080"/>
<rect x="27.3" y="75.3" width="1.5" height="1" fill="#202028"/>
<rect x="31.0" y="88.9" width="1.5" height="1.5" fill="#202028"/>
<rect x="30.3" y="22.7" width="1.5" height="2" fill="#b8b8c8"/>
<rect x="39.8" y="34.6" width="1.5" height="1.5" fill="#707080"/>
<rect x="15.9" y="54.8" width="2" height="1.5" fill="#d0d0dc"/>
<rect x="39.1" y="22.7" width="1.5" height="2" fill="#b8b8c8"/>
<rect x="5.5" y="25.7" width="1" height="1" fill="#707080"/>
<rect x="69.4" y="47.6" width="1.5" height="1.5" fill="#b8b8c8"/>
<rect x="56.5" y="46.4" width="1" height="2" fill="#b8b8c8"/>
<rect x="43.2" y="88.2" width="1.5" height="1" fill="#d0d0dc"/>
<rect x="65.7" y="91.9" width="1.5" height="2" fill="#2a2a34"/>
<rect x="58.4" y="78.3" width="1" height="1" fill="#9898a8"/>
<rect x="37.7" y="73.5" width="1.5" height="1" fill="#d0d0dc"/>
<rect x="52.7" y="38.1" width="1.5" height="1" fill="#202028"/>
<rect x="62.1" y="14.2" width="1" height="2" fill="#d0d0dc"/>
<rect x="18.5" y="31.8" width="1.5" height="1.5" fill="#101018"/>
<rect x="21.6" y="59.5" width="1" height="1.5" fill="#101018"/>
<rect x="28.2" y="76.4" width="2" height="1" fill="#d0d0dc"/>
<rect x="0.7" y="21.7" width="1.5" height="2" fill="#d0d0dc"/>
<rect x="25.9" y="71.7" width="1.5" height="2" fill="#2a2a34"/>
<rect x="44.7" y="42.3" width="1" height="2" fill="#d0d0dc"/>
<rect x="22.5" y="17.1" width="1" height="2" fill="#d0d0dc"/>
<rect x="12.6" y="12.6" width="2" height="1.5" fill="#9898a8"/>
<rect x="47.6" y="25.2" width="1" height="1" fill="#b8b8c8"/>
<rect x="26.1" y="25.7" width="1" height="1.5" fill="#b8b8c8"/>
<rect x="35.2" y="47.1" width="2" height="1" fill="#d0d0dc"/>
<rect x="1.5" y="24.9" width="2" height="1" fill="#b8b8c8"/>
<rect x="40.5" y="39.2" width="1" height="1.5" fill="#707080"/>
<rect x="28.6" y="76.5" width="1.5" height="1" fill="#9898a8"/>
<rect x="47.4" y="99.9" width="1" height="1.5" fill="#d0d0dc"/>
<rect x="36.8" y="9.0" width="2" height="2" fill="#101018"/>
<rect x="26.5" y="70.5" width="2" height="2" fill="#9898a8"/>
<rect x="24.1" y="50.6" width="2" height="1.5" fill="#101018"/>
<rect x="35.3" y="63.1" width="1" height="2" fill="#b8b8c8"/>
<rect x="48.3" y="52.0" width="1.5" height="1.5" fill="#101018"/>
<rect x="58.6" y="56.6" width="2" height="2" fill="#707080"/>
<rect x="40.1" y="58.0" width="2" height="2" fill="#b8b8c8"/>
<rect x="31.6" y="35.6" width="2" height="1" fill="#b8b8c8"/>
<rect x="65.2" y="22.7" width="1.5" height="1.5" fill="#707080"/>
<rect x="51.7" y="38.4" width="1.5" height="2" fill="#101018"/>
<rect x="28.1" y="92.1" width="1.5" height="1" fill="#9898a8"/>
<rect x="16.4" y="89.5" width="1" height="1" fill="#101018"/>
<rect x="55.8" y="57.6" width="1" height="1" fill="#d0d0dc"/>
<rect x="60.9" y="77.0" width="2" height="1.5" fill="#d0d0dc"/>
<rect x="31.8" y="60.0" width="1.5" height="1" fill="#2a2a34"/>
<rect x="34.2" y="101.3" width="1" height="1" fill="#9898a8"/>
<rect x="38.8" y="84.4" width="1" height="1" fill="#707080"/>
<rect x="56.0" y="90.9" width="2" height="1" fill="#2a2a34"/>
<rect x="55.8" y="22.7" width="1" height="1" fill="#d0d0dc"/>
<rect x="23.4" y="98.1" width="1" height="1.5" fill="#2a2a34"/>
<rect x="8.2" y="25.6" width="1" height="2" fill="#707080"/>
<rect x="43.2" y="95.5" width="1" height="2" fill="#b8b8c8"/>
<rect x="14.5" y="69.0" width="1" height="2" fill="#101018"/>
<rect x="46.8" y="49.8" width="1.5" height="2" fill="#b8b8c8"/>
<rect x="22.1" y="69.1" width="2" height="2" fill="#d0d0dc"/>
<rect x="14.6" y="28.3" width="1" height="1" fill="#2a2a34"/>
<rect x="48.6" y="53.2" width="1.5" height="1" fill="#9898a8"/>
<rect x="18.1" y="41.4" width="1.5" height="1.5" fill="#202028"/>
<rect x="13.7" y="104.5" width="1" height="2" fill="#101018"/>
<rect x="50.2" y="92.4" width="1.5" height="1" fill="#2a2a34"/>
<rect x="10.2" y="69.2" width="1.5" height="2" fill="#707080"/>
<rect x="28.6" y="52.3" width="1" height="1" fill="#202028"/>
<rect x="24.2" y="76.3" width="1.5" height="2" fill="#9898a8"/>
<rect x="8.2" y="19.9" width="1" height="2" fill="#d0d0dc"/>
<rect x="45.4" y="29.9" width="1.5" height="1" fill="#707080"/>
<rect x="52.0" y="66.3" width="2" height="1" fill="#707080"/>
<rect x="25.7" y="40.3" width="1.5" height="2" fill="#202028"/>
<rect x="66.8" y="36.4" width="1" height="2" fill="#101018"/>
<rect x="42.7" y="9.5" width="1" height="2" fill="#d0d0dc"/>
<rect x="62.7" y="32.4" width="1.5" height="1.5" fill="#707080"/>
<rect x="7.1" y="93.4" width="2" height="1" fill="#2a2a34"/>
<rect x="38.2" y="17.6" width="1" height="1.5" fill="#9898a8"/>
<rect x="1.1" y="10.9" width="2" height="2" fill="#202028"/>
<rect x="24.1" y="95.1" width="1" height="2" fill="#2a2a34"/>
<rect x="44.3" y="53.5" width="1" height="1.5" fill="#d0d0dc"/>
<rect x="35.4" y="54.5" width="2" height="1" fill="#101018"/>
<rect x="67.9" y="102.7" width="1.5" height="1.5" fill="#2a2a34"/>
<rect x="58.0" y="71.0" width="1" height="1" fill="#101018"/>
<rect x="4.7" y="52.8" width="2" height="1" fill="#707080"/>
<rect x="36.2" y="64.7" width="1.5" height="1" fill="#707080"/>
<rect x="36.1" y="17.3" width="1" height="1" fill="#2a2a34"/>
<rect x="11.7" y="70.9" width="2" height="1.5" fill="#202028"/>
<rect x="46.4" y="102.1" width="1" height="1.5" fill="#707080"/>
<rect x="32.8" y="9.5" width="1.5" height="1" fill="#2a2a34"/>
<rect x="7.6" y="48.1" width="2" height="1" fill="#202028"/>
<rect x="54.3" y="17.1" width="2" height="1" fill="#202028"/>
<rect x="4.7" y="31.1" width="1" height="2" fill="#101018"/>
<rect x="35.9" y="36.5" width="1" height="1" fill="#2a2a34"/>
<rect x="41.4" y="53.2" width="2" height="1.5" fill="#9898a8"/>
<rect x="11.9" y="18.1" width="1" height="2" fill="#9898a8"/>
<rect x="10.8" y="102.1" width="1" height="1.5" fill="#202028"/>
<rect x="43.3" y="101.5" width="1" height="1.5" fill="#101018"/>
<rect x="57.6" y="30.2" width="1" height="2" fill="#2a2a34"/>
<rect x="51.6" y="44.5" width="2" height="2" fill="#d0d0dc"/>
<rect x="2.0" y="18.7" width="2" height="2" fill="#d0d0dc"/>
<rect x="53.4" y="83.2" width="1.5" height="1.5" fill="#707080"/>
<rect x="5.5" y="33.3" width="2" height="1.5" fill="#b8b8c8"/>
<rect x="23.0" y="55.4" width="2" height="1" fill="#101018"/>
<rect x="39.8" y="56.6" width="1.5" height="2" fill="#b8b8c8"/>
<rect x="21.0" y="79.7" width="1" height="1.5" fill="#d0d0dc"/>
<rect x="5.9" y="84.8" width="1.5" height="2" fill="#707080"/>
<rect x="30.1" y="51.7" width="1.5" height="2" fill="#b8b8c8"/>
<rect x="4.3" y="59.2" width="1.5" height="1.5" fill="#202028"/>
<rect x="57.3" y="73.5" width="1.5" height="1" fill="#101018"/>
<rect x="22.0" y="54.9" width="2" height="2" fill="#9898a8"/>
<rect x="36.9" y="79.1" width="1.5" height="2" fill="#d0d0dc"/>
<rect x="67.6" y="8.7" width="1.5" height="1" fill="#202028"/>
<rect x="25.6" y="66.0" width="1.5" height="1" fill="#d0d0dc"/>
<rect x="42.6" y="65.2" width="1" height="1.5" fill="#d0d0dc"/>
<rect x="8.3" y="81.6" width="1" height="1" fill="#d0d0dc"/>
<rect x="14.9" y="65.2" width="1.5" height="2" fill="#2a2a34"/>
<rect x="60.2" y="47.0" width="2" height="2" fill="#d0d0dc"/>
<rect x="6.8" y="46.5" width="1.5" height="1.5" fill="#9898a8"/>
<rect x="2.3" y="22.5" width="1.5" height="2" fill="#9898a8"/>
<rect x="19.8" y="105.0" width="1" height="1.5" fill="#707080"/>
<rect x="43.7" y="61.6" width="2" height="2" fill="#d0d0dc"/>
<rect x="1.6" y="98.6" width="1" height="2" fill="#2a2a34"/>
<rect x="38.3" y="87.9" width="1.5" height="1.5" fill="#707080"/>
<rect x="47.6" y="103.4" width="1" height="1" fill="#2a2a34"/>
<rect x="54.7" y="50.7" width="1" height="1.5" fill="#2a2a34"/>
<rect x="53.0" y="73.7" width="1" height="1.5" fill="#2a2a34"/>
<rect x="22.4" y="79.3" width="1" height="1.5" fill="#b8b8c8"/>
<rect x="46.6" y="61.2" width="2" height="1" fill="#b8b8c8"/>
<rect x="27.8" y="75.0" width="2" height="1" fill="#101018"/>
<rect x="64.6" y="28.5" width="1.5" height="2" fill="#707080"/>
<rect x="9.8" y="99.9" width="1.5" height="1.5" fill="#9898a8"/>
<rect x="28.5" y="95.0" width="1" height="2" fill="#707080"/>
<rect x="49.2" y="56.0" width="2" height="1.5" fill="#707080"/>
<rect x="35.8" y="54.7" width="2" height="1" fill="#202028"/>
<rect x="54.1" y="39.4" width="1.5" height="1" fill="#b8b8c8"/>
<rect x="45.6" y="44.6" width="2" height="2" fill="#2a2a34"/>
<rect x="27.2" y="63.7" width="1.5" height="1.5" fill="#2a2a34"/>
<rect x="54.0" y="22.3" width="1.5" height="1.5" fill="#101018"/>
<rect x="6.3" y="55.5" width="1.5" height="1.5" fill="#101018"/>
<rect x="51.1" y="63.8" width="1" height="1.5" fill="#d0d0dc"/>
<rect x="26.4" y="77.5" width="2" height="1" fill="#707080"/>
<rect x="39.2" y="102.6" width="1.5" height="1.5" fill="#202028"/>
<rect x="34.1" y="30.4" width="2" height="1" fill="#2a2a34"/>
<rect x="47.6" y="56.6" width="1" height="2" fill="#9898a8"/>
<rect x="24.6" y="23.5" width="1.5" height="1.5" fill="#707080"/>
<rect x="10.6" y="100.2" width="1.5" height="1.5" fill="#2a2a34"/>
<rect x="6.8" y="84.1" width="1" height="2" fill="#9898a8"/>
<rect x="51.6" y="41.4" width="1" height="2" fill="#9898a8"/>
<rect x="11.8" y="104.6" width="2" height="1.5" fill="#d0d0dc"/>
<rect x="25.5" y="100.2" width="1.5" height="2" fill="#101018"/>
<rect x="60.0" y="78.5" width="1" height="1" fill="#d0d0dc"/>
<rect x="25.1" y="24.7" width="2" height="1.5" fill="#d0d0dc"/>
<rect x="20.1" y="62.4" width="1.5" height="1" fill="#d0d0dc"/>
<rect x="19.1" y="35.6" width="2" height="1" fill="#d0d0dc"/>
<rect x="61.2" y="23.5" width="2" height="1" fill="#2a2a34"/>
<rect x="42.7" y="60.7" width="1" height="2" fill="#101018"/>
<rect x="52.5" y="76.2" width="2" height="1.5" fill="#202028"/>
<rect x="21.5" y="49.4" width="1.5" height="2" fill="#2a2a34"/>
<rect x="55.1" y="30.6" width="2" height="1.5" fill="#707080"/>
<rect x="24.2" y="29.0" width="2" height="1.5" fill="#101018"/>
<rect x="39.6" y="41.8" width="1" height="2" fill="#9898a8"/>
<rect x="7.7" y="99.2" width="2" height="1" fill="#101018"/>
<rect x="21.2" y="8.3" width="1" height="1" fill="#202028"/>
<rect x="69.2" y="38.0" width="1" height="1" fill="#2a2a34"/>
<rect x="66.4" y="72.5" width="1" height="1.5" fill="#9898a8"/>
<rect x="40.0" y="103.3" width="2" height="2" fill="#101018"/>
<rect x="5.4" y="59.1" width="1" height="2" fill="#9898a8"/>
<rect x="48.6" y="67.4" width="2" height="1" fill="#9898a8"/>
<rect x="29.2" y="55.1" width="2" height="1.5" fill="#b8b8c8"/>
<rect x="2.1" y="99.2" width="1" height="1" fill="#202028"/>
<rect x="63.0" y="32.8" width="2" height="1.5" fill="#9898a8"/>
<rect x="65.7" y="102.7" width="1" height="1.5" fill="#2a2a34"/>
<rect x="65.4" y="10.0" width="2" height="2" fill="#707080"/>
<rect x="40.0" y="95.1" width="1" height="1" fill="#d0d0dc"/>
<rect x="53.8" y="23.2" width="1" height="1" fill="#b8b8c8"/>
<rect x="20.9" y="37.2" width="1.5" height="1" fill="#b8b8c8"/>
<rect x="10.4" y="26.1" width="2" height="2" fill="#202028"/>
<rect x="53.7" y="73.1" width="1" height="1.5" fill="#b8b8c8"/>
<rect x="4.8" y="85.0" width="1" height="1.5" fill="#707080"/>
<rect x="24.5" y="29.3" width="1" height="1" fill="#707080"/>
<rect x="18.4" y="64.8" width="2" height="1.5" fill="#202028"/>
<rect x="36.5" y="42.1" width="1" height="1.5" fill="#101018"/>
<rect x="12.3" y="22.5" width="1.5" height="1.5" fill="#d0d0dc"/>
<rect x="15.5" y="97.1" width="1" height="2" fill="#9898a8"/>
<rect x="45.8" y="33.2" width="2" height="1.5" fill="#202028"/>
<rect x="40.1" y="10.2" width="1" height="1" fill="#d0d0dc"/>
<rect x="21.1" y="40.0" width="1" height="2" fill="#101018"/>
<rect x="2.4" y="32.0" width="1" height="2" fill="#b8b8c8"/>
<rect x="53.4" y="31.7" width="1" height="1.5" fill="#9898a8"/>
<rect x="39.0" y="21.4" width="1.5" height="1" fill="#101018"/>
<rect x="63.8" y="104.1" width="1" height="1.5" fill="#707080"/>
<rect x="55.3" y="83.9" width="1" height="1.5" fill="#d0d0dc"/>
<rect x="63.5" y="62.5" width="1" height="1.5" fill="#101018"/>
<rect x="68.2" y="96.5" width="1.5" height="1" fill="#b8b8c8"/>
<rect x="26.6" y="14.3" width="1" height="1" fill="#9898a8"/>
<rect x="14.4" y="93.2" width="1.5" height="1.5" fill="#9898a8"/>
<rect x="9.7" y="21.2" width="2" height="1.5" fill="#2a2a34"/>
<rect x="66.2" y="26.7" width="2" height="2" fill="#9898a8"/>
<rect x="16.6" y="90.4" width="1.5" height="1.5" fill="#101018"/>
<rect x="26.1" y="19.7" width="1" height="1" fill="#d0d0dc"/>
<rect x="68.8" y="78.4" width="1" height="1" fill="#101018"/>
<rect x="21.5" y="25.7" width="1.5" height="2" fill="#b8b8c8"/>
<rect x="36.5" y="87.2" width="2" height="1.5" fill="#707080"/>
<rect x="66.3" y="15.9" width="1" height="1" fill="#9898a8"/>
<rect x="64.5" y="102.6" width="2" height="1" fill="#101018"/>
<rect x="11.2" y="40.1" width="1" height="1.5" fill="#202028"/>
<rect x="33.9" y="94.6" width="1.5" height="1.5" fill="#202028"/>
<rect x="42.2" y="90.1" width="1" height="1" fill="#707080"/>
<rect x="10.3" y="53.5" width="1" height="1.5" fill="#101018"/>
<rect x="53.4" y="46.9" width="1.5" height="1" fill="#b8b8c8"/>
<rect x="3.2" y="46.9" width="1" height="1" fill="#2a2a34"/>
<rect x="1.7" y="49.1" width="2" height="2" fill="#707080"/>
<rect x="4.4" y="10.4" width="1" height="1" fill="#d0d0dc"/>
<rect x="21.3" y="12.0" width="2" height="2" fill="#d0d0dc"/>
<rect x="25.9" y="53.9" width="2" height="1.5" fill="#202028"/>
<rect x="11.6" y="21.9" width="2" height="2" fill="#202028"/>
<rect x="29.2" y="60.4" width="1.5" height="1.5" fill="#707080"/>
<rect x="66.5" y="55.7" width="2" height="2" fill="#101018"/>
<rect x="11.4" y="57.4" width="1" height="2" fill="#d0d0dc"/>
<rect x="21.9" y="61.8" width="1" height="2" fill="#707080"/>
<rect x="66.3" y="35.6" width="2" height="2" fill="#b8b8c8"/>
<rect x="0.2" y="54.5" width="1.5" height="2" fill="#b8b8c8"/>
<rect x="64.6" y="57.9" width="2" height="1" fill="#707080"/>
<rect x="46.4" y="46.9" width="2" height="2" fill="#707080"/>
<rect x="39.8" y="13.5" width="1.5" height="2" fill="#d0d0dc"/>
<rect x="33.7" y="70.2" width="1.5" height="2" fill="#b8b8c8"/>
<rect x="31.0" y="16.2" width="1" height="1" fill="#2a2a34"/>
<rect x="40.8" y="46.7" width="1.5" height="1" fill="#b8b8c8"/>
<rect x="63.2" y="56.9" width="1.5" height="2" fill="#707080"/>
<rect x="4.1" y="15.0" width="1.5" height="1" fill="#2a2a34"/>
<rect x="20.3" y="89.6" width="2" height="1.5" fill="#202028"/>
<rect x="64.8" y="70.7" width="1.5" height="1.5" fill="#101018"/>
<rect x="68.5" y="97.0" width="1" height="2" fill="#101018"/>
<rect x="49.8" y="86.5" width="1" height="1" fill="#2a2a34"/>
<rect x="57.0" y="37.4" width="1" height="1" fill="#9898a8"/>
<rect x="66.9" y="71.8" width="2" height="2" fill="#707080"/>
<rect x="47.3" y="46.8" width="1" height="2" fill="#101018"/>
<rect x="11.2" y="33.2" width="1.5" height="1.5" fill="#d0d0dc"/>
<rect x="17.8" y="67.2" width="1.5" height="2" fill="#2a2a34"/>
<rect x="43.6" y="20.2" width="2" height="1" fill="#101018"/>
<rect x="30.5" y="47.5" width="1" height="2" fill="#707080"/>
<rect x="18.5" y="55.9" width="1" height="1.5" fill="#707080"/>
<rect x="49.8" y="11.8" width="1.5" height="1" fill="#9898a8"/>
<rect x="16.2" y="68.0" width="2" height="1" fill="#b8b8c8"/>
<rect x="36.1" y="38.6" width="2" height="1" fill="#d0d0dc"/>
<rect x="1.9" y="33.9" width="1" height="1.5" fill="#2a2a34"/>
<rect x="23.0" y="13.3" width="1.5" height="2" fill="#b8b8c8"/>
<rect x="66.6" y="68.1" width="1" height="1.5" fill="#707080"/>
<rect x="7.6" y="29.1" width="1" height="1" fill="#707080"/>
<rect x="6.8" y="76.4" width="1.5" height="2" fill="#b8b8c8"/>
<rect x="36.8" y="36.0" width="1.5" height="1" fill="#202028"/>
<rect x="30.4" y="46.6" width="1" height="1.5" fill="#d0d0dc"/>
<rect x="20.7" y="91.4" width="2" height="2" fill="#2a2a34"/>
<rect x="29.0" y="47.5" width="1.5" height="1" fill="#9898a8"/>
<rect x="8.5" y="50.0" width="1.5" height="2" fill="#101018"/>
<rect x="38.9" y="70.2" width="1.5" height="2" fill="#202028"/>
<rect x="37.9" y="104.7" width="1" height="1" fill="#202028"/>
<rect x="12.7" y="103.7" width="1" height="1" fill="#202028"/>
<rect x="38.6" y="34.4" width="2" height="2" fill="#101018"/>
<rect x="65.4" y="34.0" width="2" height="1" fill="#2a2a34"/>
<rect x="49.4" y="52.3" width="1" height="1.5" fill="#707080"/>
<rect x="13.6" y="32.5" width="2" height="1" fill="#b8b8c8"/>
<rect x="0.1" y="53.1" width="1.5" height="1" fill="#202028"/>
<rect x="69.7" y="56.3" width="2" height="1" fill="#2a2a34"/>
<rect x="28.2" y="71.0" width="2" height="1.5" fill="#101018"/>
<rect x="3.2" y="76.9" width="1" height="1" fill="#9898a8"/>
<rect x="39.9" y="47.1" width="1" height="2" fill="#707080"/>
<rect x="27.4" y="53.5" width="1" height="1" fill="#b8b8c8"/>
<rect x="59.6" y="55.2" width="1.5" height="2" fill="#202028"/>
<rect x="8.4" y="37.5" width="2" height="2" fill="#9898a8"/>
<rect x="40.4" y="79.7" width="1" height="1.5" fill="#2a2a34"/>
<rect x="2.4" y="17.0" width="1.5" height="1" fill="#d0d0dc"/>
<rect x="25.6" y="50.4" width="1.5" height="1.5" fill="#707080"/>
<rect x="14.8" y="10.3" width="1.5" height="2" fill="#2a2a34"/>
<rect x="54.1" y="52.1" width="2" height="2" fill="#707080"/>
<rect x="31.8" y="44.5" width="1.5" height="2" fill="#202028"/>
<rect x="5.2" y="30.0" width="2" height="2" fill="#9898a8"/>
<rect x="66.5" y="71.6" width="1.5" height="1.5" fill="#101018"/>
<rect x="14.9" y="36.9" width="1" height="2" fill="#202028"/>
<rect x="41.1" y="78.5" width="2" height="1.5" fill="#202028"/>
<rect x="1.2" y="48.4" width="1.5" height="1.5" fill="#2a2a34"/>
<rect x="6.3" y="44.8" width="1.5" height="1.5" fill="#2a2a34"/>
<rect x="69.6" y="27.1" width="1" height="1.5" fill="#707080"/>
<rect x="40.8" y="87.7" width="2" height="1.5" fill="#2a2a34"/>
<rect x="4.7" y="102.8" width="1.5" height="2" fill="#101018"/>
<rect x="25.5" y="54.4" width="2" height="2" fill="#d0d0dc"/>
<rect x="39.3" y="60.8" width="1" height="2" fill="#b8b8c8"/>
<rect x="22.7" y="78.5" width="1.5" height="2" fill="#b8b8c8"/>
<rect x="24.0" y="100.5" width="1" height="2" fill="#d0d0dc"/>
<rect x="55.5" y="56.0" width="1.5" height="1.5" fill="#707080"/>
<rect x="47.3" y="17.5" width="1.5" height="1.5" fill="#b8b8c8"/>
<rect x="37.1" y="104.1" width="1" height="1.5" fill="#202028"/>
<rect x="24.7" y="81.6" width="1" height="1.5" fill="#b8b8c8"/>
<rect x="38.2" y="24.3" width="1" height="1.5" fill="#d0d0dc"/>
<rect x="49.4" y="22.2" width="2" height="2" fill="#202028"/>
<rect x="1.7" y="44.3" width="1.5" height="1" fill="#101018"/>
<rect x="55.2" y="68.8" width="2" height="1" fill="#2a2a34"/>
<rect x="14.5" y="10.5" width="2" height="1" fill="#b8b8c8"/>
<rect x="51.7" y="33.6" width="1" height="2" fill="#707080"/>
<rect x="40.8" y="72.6" width="1.5" height="1" fill="#d0d0dc"/>
<rect x="43.7" y="43.1" width="1.5" height="1" fill="#d0d0dc"/>
<rect x="59.2" y="76.0" width="1.5" height="2" fill="#b8b8c8"/>
<rect x="19.7" y="57.0" width="1" height="2" fill="#d0d0dc"/>
<rect x="15.6" y="68.1" width="2" height="1.5" fill="#9898a8"/>
<rect x="55.2" y="94.0" width="1" height="2" fill="#9898a8"/>
<rect x="47.4" y="24.6" width="2" height="2" fill="#d0d0dc"/>
<rect x="24.4" y="82.7" width="1" height="1.5" fill="#d0d0dc"/>
<rect x="25.5" y="30.2" width="2" height="1" fill="#101018"/>
<rect x="59.5" y="80.3" width="2" height="2" fill="#2a2a34"/>
<rect x="65.9" y="10.4" width="1" height="2" fill="#d0d0dc"/>
<rect x="24.7" y="103.5" width="2" height="1.5" fill="#202028"/>
<rect x="4.4" y="17.9" width="2" height="2" fill="#b8b8c8"/>
<rect x="12.3" y="34.4" width="1" height="2" fill="#101018"/>
<rect x="47.5" y="13.2" width="1.5" height="1" fill="#2a2a34"/>
<rect x="39.3" y="42.5" width="1" height="1" fill="#d0d0dc"/>
<rect x="64.7" y="37.1" width="1" height="1.5" fill="#b8b8c8"/>
<rect x="21.7" y="65.4" width="1" height="1" fill="#d0d0dc"/>
<rect x="11.4" y="17.3" width="2" height="1" fill="#101018"/>
<rect x="21.8" y="94.0" width="2" height="2" fill="#2a2a34"/>
<rect x="31.1" y="77.6" width="1.5" height="1.5" fill="#9898a8"/>
<rect x="25.4" y="33.8" width="2" height="2" fill="#707080"/>
<rect x="37.3" y="84.5" width="1" height="1.5" fill="#2a2a34"/>
<rect x="1.6" y="37.2" width="2" height="1" fill="#b8b8c8"/>
<rect x="43.4" y="35.7" width="1.5" height="2" fill="#9898a8"/>
<rect x="47.9" y="75.1" width="1.5" height="1" fill="#101018"/>
<rect x="27.8" y="61.6" width="2" height="1" fill="#202028"/>
<rect x="5.2" y="32.0" width="2" height="1.5" fill="#d0d0dc"/>
<rect x="36.0" y="38.1" width="1.5" height="2" fill="#2a2a34"/>
<rect x="25.0" y="100.6" width="1" height="1" fill="#202028"/>
<rect x="60.7" y="85.5" width="2" height="1" fill="#101018"/>
<rect x="31.3" y="104.0" width="2" height="2" fill="#707080"/>
<rect x="41.4" y="64.5" width="1" height="1.5" fill="#9898a8"/>
<rect x="52.1" y="31.5" width="1" height="1.5" fill="#707080"/>
<rect x="45.7" y="86.8" width="2" height="2" fill="#202028"/>
<rect x="1.2" y="29.3" width="1" height="2" fill="#101018"/>
<rect x="5.1" y="81.9" width="1" height="2" fill="#d0d0dc"/>
<rect x="36.6" y="102.7" width="1.5" height="1" fill="#9898a8"/>
<rect x="57.0" y="78.2" width="1" height="1" fill="#2a2a34"/>
<rect x="24.1" y="78.4" width="1" height="1" fill="#101018"/>
<rect x="44.4" y="79.8" width="2" height="1.5" fill="#707080"/>
<rect x="56.4" y="95.4" width="1" height="1.5" fill="#101018"/>
<rect x="44.5" y="67.7" width="1" height="2" fill="#101018"/>
<rect x="21.3" y="93.3" width="1.5" height="1.5" fill="#101018"/>
<rect x="50.0" y="26.0" width="2" height="1" fill="#707080"/>
<rect x="16.8" y="35.1" width="2" height="1" fill="#9898a8"/>
<rect x="4.6" y="26.1" width="1.5" height="1.5" fill="#9898a8"/>
<rect x="65.5" y="72.5" width="2" height="2" fill="#b8b8c8"/>
<rect x="45.6" y="75.1" width="1.5" height="1.5" fill="#101018"/>
<rect x="0.5" y="47.8" width="1.5" height="1" fill="#202028"/>
<rect x="37.2" y="12.7" width="1.5" height="2" fill="#b8b8c8"/>
<rect x="26.0" y="40.0" width="2" height="2" fill="#9898a8"/>
<rect x="64.0" y="25.5" width="1" height="1.5" fill="#202028"/>
<rect x="46.1" y="70.5" width="1" height="1.5" fill="#101018"/>
<rect x="13.3" y="78.3" width="2" height="1" fill="#b8b8c8"/>
<rect x="9.1" y="45.2" width="1.5" height="2" fill="#9898a8"/>
<rect x="26.3" y="23.8" width="2" height="1" fill="#d0d0dc"/>
<rect x="24.6" y="14.5" width="1" height="2" fill="#d0d0dc"/>
<rect x="2.6" y="10.8" width="1.5" height="1" fill="#101018"/>
<rect x="6.1" y="12.5" width="1.5" height="2" fill="#2a2a34"/>
<rect x="69.2" y="85.9" width="1" height="1" fill="#202028"/>
<rect x="20.1" y="26.5" width="1.5" height="1" fill="#b8b8c8"/>
<rect x="5.2" y="58.7" width="1" height="2" fill="#b8b8c8"/>
<rect x="55.4" y="47.7" width="2" height="2" fill="#707080"/>
<rect x="35.6" y="45.6" width="1.5" height="1" fill="#707080"/>
<rect x="69.1" y="10.7" width="1.5" height="1" fill="#2a2a34"/>
<rect x="29.6" y="84.5" width="1.5" height="1.5" fill="#2a2a34"/>
<rect x="37.9" y="99.2" width="1" height="1.5" fill="#9898a8"/>
<rect x="56.0" y="93.5" width="1" height="2" fill="#101018"/>
<rect x="2.9" y="35.6" width="1" height="1" fill="#d0d0dc"/>
<rect x="49.0" y="97.7" width="2" height="1.5" fill="#9898a8"/>
<rect x="60.6" y="41.2" width="1" height="2" fill="#d0d0dc"/>
<rect x="68.6" y="79.8" width="2" height="1.5" fill="#2a2a34"/>
<rect x="41.3" y="73.6" width="2" height="1.5" fill="#202028"/>
<rect x="69.9" y="89.4" width="1.5" height="2" fill="#101018"/>
<rect x="10.1" y="47.2" width="1" height="1" fill="#202028"/>
<rect x="54.4" y="71.6" width="2" height="2" fill="#707080"/>
<rect x="19.6" y="39.3" width="1.5" height="1" fill="#202028"/>
<rect x="18.8" y="72.8" width="1" height="1.5" fill="#2a2a34"/>
<rect x="13.1" y="57.1" width="1" height="2" fill="#202028"/>
<rect x="59.4" y="27.3" width="2" height="1.5" fill="#202028"/>
<rect x="51.3" y="19.2" width="1" height="2" fill="#101018"/>
<rect x="23.0" y="34.7" width="2" height="1" fill="#202028"/>
<rect x="4.6" y="77.5" width="1.5" height="1" fill="#9898a8"/>
<rect x="50.6" y="91.1" width="1.5" height="1.5" fill="#101018"/>
<rect x="22.2" y="46.6" width="2" height="2" fill="#d0d0dc"/>
<rect x="54.7" y="60.2" width="1" height="2" fill="#202028"/>
<rect x="67.7" y="27.7" width="2" height="1" fill="#202028"/>
<rect x="48.0" y="48.9" width="1" height="2" fill="#2a2a34"/>
<rect x="51.1" y="63.5" width="1.5" height="2" fill="#101018"/>
<rect x="4.1" y="17.5" width="1" height="1.5" fill="#b8b8c8"/>
<rect x="47.3" y="32.8" width="2" height="1.5" fill="#d0d0dc"/>
<rect x="59.9" y="44.1" width="1" height="2" fill="#b8b8c8"/>
<rect x="45.4" y="54.2" width="1" height="2" fill="#b8b8c8"/>
<rect x="11.3" y="14.2" width="1.5" height="1" fill="#202028"/>
<rect x="6.5" y="76.0" width="1.5" height="1" fill="#2a2a34"/>
<rect x="26.1" y="71.0" width="1.5" height="2" fill="#d0d0dc"/>
<rect x="44.7" y="31.4" width="2" height="2" fill="#b8b8c8"/>
<rect x="68.2" y="35.8" width="1.5" height="2" fill="#2a2a34"/>
<rect x="29.7" y="28.5" width="1.5" height="1.5" fill="#707080"/>
<rect x="33.7" y="96.3" width="2" height="1.5" fill="#9898a8"/>
<rect x="4.1" y="20.8" width="1.5" height="2" fill="#202028"/>
<rect x="6.8" y="101.0" width="1.5" height="1" fill="#101018"/>
<rect x="31.9" y="57.1" width="1.5" height="1.5" fill="#2a2a34"/>
<rect x="67.3" y="74.5" width="2" height="1.5" fill="#707080"/>
<rect x="59.8" y="15.8" width="1" height="2" fill="#b8b8c8"/>
<rect x="28.0" y="15.7" width="1" height="1.5" fill="#101018"/>
<rect x="10.4" y="49.1" width="1" height="1" fill="#202028"/>
<rect x="31.1" y="36.6" width="1.5" height="1" fill="#d0d0dc"/>
<rect x="51.0" y="8.3" width="1.5" height="1" fill="#9898a8"/>
<rect x="9.3" y="21.2" width="2" height="1" fill="#101018"/>
<rect x="39.7" y="23.0" width="1.5" height="1" fill="#d0d0dc"/>
<rect x="42.4" y="12.9" width="1.5" height="2" fill="#b8b8c8"/>
<rect x="10.1" y="83.7" width="2" height="1" fill="#b8b8c8"/>
<rect x="68.3" y="40.2" width="1" height="1" fill="#707080"/>
<rect x="63.8" y="25.3" width="1.5" height="1.5" fill="#707080"/>
<rect x="64.2" y="28.2" width="1" height="1.5" fill="#101018"/>
<rect x="64.7" y="100.0" width="1" height="1.5" fill="#202028"/>
<rect x="4.2" y="48.4" width="1" height="2" fill="#2a2a34"/>
<rect x="16.7" y="89.9" width="2" height="1.5" fill="#202028"/>
<rect x="17.4" y="61.5" width="1" height="2" fill="#d0d0dc"/>
<rect x="52.1" y="81.7" width="2" height="1.5" fill="#d0d0dc"/>
<rect x="60.8" y="98.9" width="1.5" height="1" fill="#9898a8"/>
<rect x="8.3" y="17.3" width="1" height="1.5" fill="#9898a8"/>
<rect x="34.7" y="70.5" width="1" height="1.5" fill="#d0d0dc"/>
<rect x="5.4" y="29.9" width="2" height="1" fill="#202028"/>
<rect x="9.0" y="76.2" width="2" height="2" fill="#202028"/>
<rect x="68.5" y="88.5" width="1.5" height="1.5" fill="#2a2a34"/>
<rect x="16.5" y="103.0" width="1.5" height="1" fill="#707080"/>
<rect x="45.3" y="42.2" width="2" height="1.5" fill="#d0d0dc"/>
<rect x="56.0" y="73.6" width="1.5" height="1.5" fill="#2a2a34"/>
<rect x="47.7" y="12.3" width="1.5" height="2" fill="#707080"/>
<rect x="7.0" y="85.5" width="2" height="1.5" fill="#d0d0dc"/>
<rect x="44.5" y="75.9" width="2" height="2" fill="#101018"/>
<rect x="5.9" y="32.7" width="1.5" height="1" fill="#2a2a34"/>
<rect x="6.6" y="14.5" width="1.5" height="1" fill="#101018"/>
<rect x="56.0" y="98.5" width="1.5" height="1.5" fill="#2a2a34"/>
<rect x="51.0" y="10.9" width="2" height="1.5" fill="#101018"/>
<rect x="34.8" y="9.2" width="1" height="1" fill="#707080"/>
<rect x="55.5" y="66.5" width="1" height="1.5" fill="#b8b8c8"/>
<rect x="32.7" y="55.3" width="1" height="2" fill="#d0d0dc"/>
<rect x="29.5" y="42.3" width="1.5" height="2" fill="#9898a8"/>
<rect x="64.6" y="92.2" width="1" height="1" fill="#202028"/>
<rect x="23.9" y="69.1" width="2" height="2" fill="#9898a8"/>
<rect x="6.8" y="17.0" width="2" height="1" fill="#707080"/>
<rect x="20.9" y="38.7" width="1.5" height="1" fill="#d0d0dc"/>
<rect x="53.1" y="70.6" width="1" height="1.5" fill="#707080"/>
<rect x="46.9" y="23.3" width="1.5" height="2" fill="#202028"/>
<rect x="52.1" y="94.9" width="2" height="1.5" fill="#202028"/>
<rect x="6.5" y="22.1" width="1" height="1.5" fill="#b8b8c8"/>
<rect x="8.0" y="21.6" width="2" height="2" fill="#9898a8"/>
<rect x="19.6" y="83.5" width="1" height="1.5" fill="#d0d0dc"/>
<rect x="56.2" y="8.1" width="1.5" height="1" fill="#202028"/>
<rect x="63.3" y="28.5" width="1.5" height="2" fill="#d0d0dc"/>
<rect x="53.8" y="65.3" width="1" height="1.5" fill="#101018"/>
<rect x="23.0" y="71.5" width="1.5" height="1" fill="#707080"/>
<rect x="18.0" y="73.5" width="2" height="1" fill="#b8b8c8"/>
<rect x="41.7" y="63.0" width="2" height="1.5" fill="#202028"/>
<rect x="0.2" y="103.8" width="2" height="1.5" fill="#2a2a34"/>
<rect x="43.9" y="54.2" width="1.5" height="1" fill="#101018"/>
<rect x="49.2" y="92.6" width="2" height="1" fill="#707080"/>
<rect x="45.2" y="43.5" width="1" height="1" fill="#707080"/>
<rect x="63.7" y="54.0" width="1.5" height="1" fill="#9898a8"/>
<rect x="16.9" y="70.9" width="2" height="1.5" fill="#101018"/>
<rect x="30.6" y="52.3" width="1.5" height="1.5" fill="#707080"/>
<rect x="35.4" y="100.3" width="2" height="2" fill="#d0d0dc"/>
<rect x="10.2" y="12.4" width="2" height="1.5" fill="#707080"/>
<rect x="65.0" y="61.4" width="2" height="1" fill="#707080"/>
<rect x="58.6" y="10.9" width="1" height="1.5" fill="#d0d0dc"/>
<rect x="8.0" y="84.2" width="2" height="2" fill="#b8b8c8"/>
<rect x="58.7" y="45.0" width="1" height="1" fill="#9898a8"/>
<rect x="23.9" y="51.1" width="1" height="1" fill="#2a2a34"/>
<rect x="50.7" y="84.7" width="1" height="1" fill="#b8b8c8"/>
<rect x="26.5" y="53.6" width="2" height="1.5" fill="#b8b8c8"/>
<rect x="3.1" y="55.4" width="1.5" height="1" fill="#b8b8c8"/>
<rect x="55.6" y="33.4" width="1" height="1.5" fill="#2a2a34"/>
<rect x="42.1" y="101.0" width="1" height="1.5" fill="#b8b8c8"/>
<rect x="14.0" y="86.1" width="1.5" height="1.5" fill="#b8b8c8"/>
<rect x="63.3" y="15.3" width="2" height="1.5" fill="#202028"/>
<rect x="14.3" y="95.1" width="2" height="1" fill="#2a2a34"/>
<rect x="3.5" y="35.7" width="1.5" height="1.5" fill="#d0d0dc"/>
<rect x="66.0" y="65.7" width="1.5" height="1" fill="#2a2a34"/>
<rect x="28.8" y="47.2" width="1.5" height="1.5" fill="#202028"/>
<rect x="15.9" y="14.1" width="1.5" height="1.5" fill="#b8b8c8"/>
<rect x="18.9" y="36.3" width="2" height="1.5" fill="#202028"/>
<rect x="25.8" y="52.2" width="1.5" height="2" fill="#b8b8c8"/>
<rect x="34.4" y="44.6" width="2" height="1" fill="#d0d0dc"/>
<rect x="0.5" y="81.6" width="1" height="1" fill="#9898a8"/>
<rect x="2.1" y="54.6" width="2" height="1" fill="#b8b8c8"/>
<rect x="25.2" y="51.0" width="1" height="1" fill="#202028"/>
<rect x="29.3" y="47.0" width="2" height="2" fill="#2a2a34"/>
<rect x="34.5" y="41.3" width="1.5" height="2" fill="#2a2a34"/>
<rect x="27.3" y="102.0" width="2" height="1" fill="#101018"/>
<rect x="47.2" y="52.8" width="2" height="2" fill="#202028"/>
<rect x="36.1" y="103.9" width="2" height="2" fill="#b8b8c8"/>
<rect x="41.9" y="96.1" width="2" height="1.5" fill="#b8b8c8"/>
<rect x="9.3" y="8.7" width="1" height="2" fill="#202028"/>
<rect x="18.9" y="95.0" width="1.5" height="1" fill="#2a2a34"/>
<rect x="51.5" y="37.8" width="1" height="1.5" fill="#707080"/>
<rect x="15.7" y="79.1" width="1.5" height="1" fill="#101018"/>
<rect x="28.7" y="52.8" width="2" height="2" fill="#b8b8c8"/>
<rect x="36.9" y="11.3" width="1" height="1.5" fill="#707080"/>
<rect x="12.0" y="64.2" width="1.5" height="1" fill="#707080"/>
<rect x="56.5" y="20.2" width="2" height="2" fill="#202028"/>
<rect x="7.7" y="40.4" width="2" height="1.5" fill="#707080"/>
<rect x="36.7" y="20.9" width="1" height="2" fill="#d0d0dc"/>
<rect x="63.5" y="88.4" width="2" height="1" fill="#9898a8"/>
<rect x="13.9" y="96.6" width="2" height="2" fill="#707080"/>
<rect x="24.5" y="104.2" width="2" height="1" fill="#d0d0dc"/>
<rect x="9.1" y="98.4" width="1" height="2" fill="#101018"/>
<rect x="16.6" y="31.5" width="1" height="1.5" fill="#2a2a34"/>
<rect x="38.4" y="51.1" width="2" height="2" fill="#d0d0dc"/>
<rect x="33.1" y="80.4" width="2" height="1.5" fill="#2a2a34"/>
<rect x="66.9" y="66.5" width="1.5" height="2" fill="#101018"/>
<rect x="44.8" y="22.2" width="1" height="1" fill="#9898a8"/>
<rect x="52.1" y="19.2" width="2" height="1.5" fill="#b8b8c8"/>
<rect x="59.4" y="87.7" width="2" height="1" fill="#202028"/>
<rect x="61.8" y="98.7" width="1" height="1" fill="#101018"/>
<rect x="27.5" y="57.7" width="1.5" height="1" fill="#2a2a34"/>
<rect x="62.6" y="104.1" width="2" height="1" fill="#707080"/>
<rect x="46.6" y="75.3" width="1" height="2" fill="#d0d0dc"/>
<rect x="69.0" y="81.8" width="2" height="2" fill="#707080"/>
<rect x="56.2" y="52.8" width="1" height="1.5" fill="#9898a8"/>
<rect x="31.0" y="87.7" width="1" height="1" fill="#101018"/>
<rect x="0.3" y="46.6" width="1" height="1" fill="#9898a8"/>
<rect x="15.5" y="48.3" width="2" height="1" fill="#101018"/>
<rect x="47.4" y="10.0" width="2" height="2" fill="#2a2a34"/>
<rect x="12.1" y="37.7" width="1.5" height="1" fill="#9898a8"/>
<rect x="23.7" y="14.9" width="1" height="2" fill="#101018"/>
<rect x="38.5" y="13.1" width="2" height="1.5" fill="#707080"/>
<rect x="56.6" y="101.1" width="1.5" height="1.5" fill="#2a2a34"/>
<rect x="54.4" y="66.3" width="2" height="1" fill="#202028"/>
<rect x="60.4" y="67.4" width="1" height="1" fill="#d0d0dc"/>
<rect x="45.1" y="39.4" width="1.5" height="2" fill="#707080"/>
<rect x="13.9" y="11.3" width="1" height="1.5" fill="#202028"/>
<rect x="63.0" y="69.5" width="1" height="2" fill="#101018"/>
<rect x="22.8" y="42.1" width="1.5" height="1.5" fill="#202028"/>
<rect x="19.2" y="75.0" width="2" height="1.5" fill="#b8b8c8"/>
<rect x="52.1" y="80.2" width="2" height="2" fill="#b8b8c8"/>
<rect x="29.6" y="85.8" width="2" height="2" fill="#d0d0dc"/>
<rect x="13.7" y="59.5" width="1.5" height="1" fill="#9898a8"/>
<rect x="36.6" y="48.4" width="1.5" height="1.5" fill="#101018"/>
<rect x="34.2" y="58.8" width="2" height="2" fill="#d0d0dc"/>
<rect x="25.0" y="47.6" width="2" height="2" fill="#d0d0dc"/>
<rect x="9.3" y="38.1" width="1" height="1.5" fill="#707080"/>
<rect x="9.1" y="80.5" width="2" height="2" fill="#2a2a34"/>
<rect x="11.0" y="63.0" width="1.5" height="2" fill="#202028"/>
<rect x="32.4" y="45.2" width="2" height="1.5" fill="#d0d0dc"/>
<rect x="4.2" y="50.7" width="1" height="2" fill="#2a2a34"/>
<rect x="46.8" y="33.2" width="1" height="1.5" fill="#9898a8"/>
<rect x="31.8" y="49.5" width="2" height="2" fill="#2a2a34"/>
<rect x="69.4" y="94.2" width="1.5" height="1.5" fill="#101018"/>
<rect x="6.3" y="64.4" width="1.5" height="1" fill="#b8b8c8"/>
<rect x="35.9" y="74.8" width="2" height="2" fill="#9898a8"/>
<rect x="36.9" y="8.1" width="1" height="1" fill="#2a2a34"/>
<rect x="59.2" y="82.6" width="1.5" height="1.5" fill="#101018"/>
<rect x="34.7" y="51.5" width="1" height="2" fill="#d0d0dc"/>
<rect x="36.8" y="97.8" width="1" height="1.5" fill="#101018"/>
<rect x="50.5" y="76.1" width="2" height="2" fill="#d0d0dc"/>
<rect x="8.8" y="58.0" width="1.5" height="1.5" fill="#2a2a34"/>
<rect x="48.2" y="36.4" width="1.5" height="1.5" fill="#b8b8c8"/>
<rect x="14.3" y="97.1" width="1" height="2" fill="#b8b8c8"/>
<rect x="34.1" y="53.8" width="2" height="2" fill="#b8b8c8"/>
<rect x="23.4" y="45.8" width="1.5" height="1" fill="#d0d0dc"/>
<rect x="5.9" y="9.8" width="1" height="1" fill="#2a2a34"/>
<rect x="34.6" y="48.7" width="2" height="1.5" fill="#d0d0dc"/>
<rect x="21.5" y="26.3" width="1" height="1.5" fill="#707080"/>
<rect x="2.1" y="67.1" width="2" height="1" fill="#2a2a34"/>
<rect x="17.1" y="20.2" width="2" height="2" fill="#d0d0dc"/>
<rect x="14.2" y="36.7" width="1.5" height="1" fill="#202028"/>
<rect x="64.6" y="60.5" width="1.5" height="1" fill="#b8b8c8"/>
<rect x="4.7" y="36.6" width="1" height="1.5" fill="#b8b8c8"/>
<rect x="60.8" y="92.1" width="1" height="1.5" fill="#b8b8c8"/>
<rect x="16.7" y="90.8" width="1" height="1.5" fill="#9898a8"/>
<rect x="37.4" y="13.4" width="1" height="2" fill="#707080"/>
<rect x="18.4" y="87.8" width="2" height="1.5" fill="#9898a8"/>
<rect x="57.7" y="33.7" width="2" height="1.5" fill="#202028"/>
<rect x="37.6" y="77.3" width="2" height="1.5" fill="#9898a8"/>
<rect x="15.6" y="27.3" width="1.5" height="1" fill="#707080"/>
<rect x="38.7" y="16.7" width="1.5" height="1.5" fill="#101018"/>
<rect x="60.2" y="59.3" width="2" height="1.5" fill="#b8b8c8"/>
<rect x="61.7" y="45.8" width="1" height="1" fill="#9898a8"/>
<rect x="50.8" y="99.4" width="1" height="1" fill="#9898a8"/>
<rect x="8.8" y="16.1" width="2" height="1.5" fill="#2a2a34"/>
<rect x="29.1" y="100.8" width="1" height="1.5" fill="#b8b8c8"/>
<rect x="9.4" y="65.6" width="2" height="1" fill="#101018"/>
<rect x="41.0" y="51.8" width="1.5" height="2" fill="#707080"/>
<rect x="2.0" y="92.2" width="2" height="1.5" fill="#101018"/>
<rect x="62.1" y="26.2" width="2" height="1" fill="#707080"/>
<rect x="22.2" y="27.5" width="1.5" height="1.5" fill="#707080"/>
<rect x="30.7" y="21.1" width="1.5" height="1.5" fill="#d0d0dc"/>
<rect x="53.0" y="93.6" width="1.5" height="2" fill="#d0d0dc"/>
<rect x="38.6" y="103.8" width="2" height="2" fill="#202028"/>
<rect x="10.2" y="63.2" width="1.5" height="1.5" fill="#b8b8c8"/>
<rect x="69.5" y="81.3" width="1" height="2" fill="#707080"/>
<rect x="6.0" y="44.7" width="1.5" height="1" fill="#202028"/>
<rect x="66.3" y="19.9" width="1.5" height="1" fill="#202028"/>
<rect x="47.6" y="77.9" width="1" height="2" fill="#9898a8"/>
<rect x="5.6" y="49.2" width="1" height="1" fill="#9898a8"/>
<rect x="42.7" y="92.1" width="2" height="1" fill="#202028"/>
<rect x="57.5" y="96.9" width="2" height="2" fill="#202028"/>
<rect x="40.0" y="60.9" width="1" height="1.5" fill="#b8b8c8"/>
<rect x="30.2" y="89.9" width="2" height="1" fill="#9898a8"/>
<rect x="18.2" y="12.5" width="1.5" height="1.5" fill="#202028"/>
<rect x="59.1" y="57.7" width="1" height="1" fill="#707080"/>
<rect x="1.1" y="10.8" width="1.5" height="1" fill="#2a2a34"/>
<rect x="45.3" y="42.0" width="1" height="1" fill="#d0d0dc"/>
<rect x="43.0" y="96.4" width="2" height="1.5" fill="#101018"/>
<rect x="51.0" y="62.5" width="1" height="1.5" fill="#d0d0dc"/>
<rect x="52.0" y="86.6" width="2" height="1.5" fill="#9898a8"/>
<rect x="11.8" y="62.0" width="1.5" height="2" fill="#b8b8c8"/>
<rect x="2.6" y="79.2" width="1" height="2" fill="#2a2a34"/>
<rect x="42.7" y="31.5" width="1" height="2" fill="#b8b8c8"/>
<rect x="9.9" y="81.2" width="1" height="1.5" fill="#d0d0dc"/>
<rect x="62.0" y="8.1" width="2" height="1" fill="#101018"/>
<rect x="42.3" y="98.7" width="1" height="2" fill="#202028"/>
<rect x="43.2" y="17.7" width="2" height="1.5" fill="#202028"/>
<rect x="17.3" y="70.3" width="1" height="2" fill="#2a2a34"/>
<rect x="61.1" y="72.5" width="1.5" height="1" fill="#9898a8"/>
<rect x="30.4" y="90.1" width="1.5" height="2" fill="#202028"/>
<rect x="62.3" y="87.6" width="2" height="1" fill="#b8b8c8"/>
<rect x="39.0" y="61.6" width="1.5" height="1" fill="#9898a8"/>
<rect x="40.3" y="38.3" width="1.5" height="1" fill="#b8b8c8"/>
<rect x="40.2" y="58.3" width="1.5" height="1" fill="#707080"/>
<rect x="67.0" y="67.3" width="1" height="2" fill="#101018"/>
<rect x="19.5" y="27.7" width="2" height="1" fill="#9898a8"/>
<rect x="12.5" y="77.5" width="2" height="2" fill="#202028"/>
<rect x="42.0" y="68.6" width="1.5" height="2" fill="#707080"/>
<rect x="9.9" y="57.2" width="2" height="2" fill="#202028"/>
<rect x="15.1" y="79.1" width="1.5" height="2" fill="#202028"/>
<rect x="18.8" y="81.2" width="1.5" height="1.5" fill="#9898a8"/>
<rect x="26.1" y="49.9" width="2" height="2" fill="#101018"/>
<rect x="13.0" y="100.5" width="1.5" height="2" fill="#202028"/>
<rect x="69.7" y="68.3" width="1.5" height="1" fill="#707080"/>
<rect x="8.4" y="38.7" width="2" height="2" fill="#2a2a34"/>
<rect x="16.1" y="82.3" width="1.5" height="2" fill="#101018"/>
<rect x="58.6" y="73.2" width="2" height="2" fill="#d0d0dc"/>
<rect x="18.8" y="91.4" width="2" height="1" fill="#202028"/>
<rect x="30.0" y="102.1" width="2" height="1" fill="#707080"/>
<rect x="27.4" y="68.2" width="1" height="1" fill="#d0d0dc"/>
<rect x="62.2" y="25.2" width="1" height="1" fill="#101018"/>
<rect x="39.7" y="29.5" width="1" height="2" fill="#d0d0dc"/>
<rect x="60.1" y="8.6" width="1.5" height="1" fill="#9898a8"/>
<rect x="44.6" y="52.6" width="1.5" height="1.5" fill="#9898a8"/>
<rect x="30.9" y="92.4" width="2" height="2" fill="#b8b8c8"/>
<rect x="68.8" y="87.3" width="2" height="2" fill="#b8b8c8"/>
<rect x="29.7" y="26.3" width="2" height="1.5" fill="#202028"/>
<rect x="23.9" y="57.9" width="1" height="2" fill="#202028"/>
<rect x="16.6" y="41.4" width="1" height="1.5" fill="#707080"/>
<rect x="16.2" y="50.4" width="1.5" height="2" fill="#707080"/>
<rect x="62.2" y="53.2" width="1.5" height="2" fill="#101018"/>
<rect x="55.7" y="86.0" width="2" height="2" fill="#9898a8"/>
<rect x="38.2" y="40.5" width="1.5" height="2" fill="#d0d0dc"/>
<rect x="69.1" y="56.2" width="2" height="2" fill="#d0d0dc"/>
<rect x="18.5" y="92.4" width="1.5" height="1.5" fill="#707080"/>
<rect x="29.6" y="22.0" width="1.5" height="2" fill="#202028"/>
<rect x="16.4" y="22.8" width="1" height="1.5" fill="#9898a8"/>
<rect x="69.2" y="9.5" width="1.5" height="1" fill="#b8b8c8"/>
<rect x="55.2" y="97.9" width="1.5" height="1" fill="#b8b8c8"/>
<rect x="67.3" y="39.7" width="1" height="1.5" fill="#101018"/>
<rect x="22.1" y="55.6" width="2" height="2" fill="#202028"/>
<rect x="59.8" y="65.3" width="2" height="2" fill="#b8b8c8"/>
<rect x="16.8" y="44.1" width="2" height="1" fill="#707080"/>
<rect x="29.0" y="49.5" width="1" height="1" fill="#9898a8"/>
<rect x="34.4" y="86.1" width="1" height="2" fill="#d0d0dc"/>
<rect x="4.1" y="67.5" width="1" height="1.5" fill="#b8b8c8"/>
<rect x="35.4" y="74.7" width="1" height="2" fill="#9898a8"/>
<rect x="65.2" y="33.5" width="1.5" height="1" fill="#b8b8c8"/>
<rect x="69.7" y="52.2" width="2" height="1" fill="#202028"/>
<rect x="17.6" y="80.1" width="1" height="1" fill="#b8b8c8"/>
<rect x="5.9" y="60.6" width="1.5" height="2" fill="#9898a8"/>
<rect x="31.2" y="22.3" width="2" height="2" fill="#101018"/>
<rect x="16.3" y="77.6" width="2" height="1.5" fill="#9898a8"/>
<rect x="55.0" y="32.1" width="1" height="1" fill="#2a2a34"/>
<rect x="5.8" y="29.6" width="2" height="1.5" fill="#202028"/>
<rect x="19.9" y="99.5" width="2" height="2" fill="#707080"/>
<rect x="31.7" y="82.6" width="1.5" height="1.5" fill="#707080"/>
<rect x="8.7" y="71.9" width="2" height="1.5" fill="#d0d0dc"/>
<rect x="22.2" y="58.9" width="1.5" height="1" fill="#d0d0dc"/>
<rect x="54.1" y="8.6" width="1.5" height="2" fill="#707080"/>
<rect x="58.0" y="52.4" width="1.5" height="1.5" fill="#202028"/>
<rect x="1.2" y="39.0" width="1.5" height="2" fill="#202028"/>
<rect x="47.9" y="49.2" width="1.5" height="2" fill="#2a2a34"/>
<rect x="50.0" y="55.7" width="1.5" height="1.5" fill="#202028"/>
<rect x="30.0" y="65.8" width="2" height="1.5" fill="#b8b8c8"/>
<rect x="10.9" y="69.1" width="1.5" height="1" fill="#b8b8c8"/>
<rect x="59.2" y="80.7" width="2" height="1.5" fill="#9898a8"/>
<rect x="25.8" y="9.2" width="1.5" height="2" fill="#101018"/>
<rect x="12.0" y="61.2" width="1" height="1.5" fill="#707080"/>
<rect x="16.3" y="83.5" width="1" height="1.5" fill="#2a2a34"/>
<rect x="35.6" y="85.6" width="1" height="2" fill="#202028"/>
<rect x="36.5" y="29.7" width="1" height="1.5" fill="#2a2a34"/>
<rect x="36.7" y="65.8" width="1.5" height="2" fill="#707080"/>
<rect x="44.5" y="64.1" width="1.5" height="1.5" fill="#707080"/>
<rect x="58.9" y="59.6" width="1" height="2" fill="#9898a8"/>
<rect x="63.4" y="59.2" width="1" height="1" fill="#202028"/>
<rect x="46.3" y="32.1" width="1" height="2" fill="#202028"/>
<rect x="30.6" y="42.3" width="1" height="1.5" fill="#9898a8"/>
<rect x="63.1" y="8.7" width="1.5" height="1.5" fill="#9898a8"/>
<rect x="22.0" y="51.4" width="2" height="2" fill="#707080"/>
<rect x="63.0" y="10.1" width="2" height="2" fill="#202028"/>
<rect x="68.0" y="51.5" width="2" height="2" fill="#707080"/>
<rect x="19.8" y="28.2" width="1.5" height="1" fill="#d0d0dc"/>
<rect x="39.0" y="58.4" width="1.5" height="1" fill="#d0d0dc"/>
<rect x="56.7" y="71.3" width="1" height="1" fill="#202028"/>
<rect x="63.2" y="102.3" width="2" height="1.5" fill="#2a2a34"/>
<rect x="55.7" y="71.5" width="1" height="1.5" fill="#9898a8"/>
<rect x="24.3" y="70.3" width="2" height="1" fill="#202028"/>
<rect x="63.1" y="95.6" width="1.5" height="1" fill="#2a2a34"/>
<rect x="34.7" y="87.3" width="2" height="2" fill="#d0d0dc"/>
<rect x="65.1" y="51.9" width="1" height="2" fill="#2a2a34"/>
<rect x="42.1" y="71.7" width="1.5" height="1.5" fill="#202028"/>
<rect x="65.6" y="78.1" width="2" height="1" fill="#202028"/>
<rect x="36.5" y="80.7" width="2" height="1.5" fill="#b8b8c8"/>
<rect x="47.5" y="12.5" width="1.5" height="1" fill="#d0d0dc"/>
<rect x="14.4" y="81.9" width="1" height="2" fill="#101018"/>
<rect x="38.6" y="32.8" width="1" height="1.5" fill="#707080"/>
<rect x="3.0" y="61.5" width="1" height="2" fill="#707080"/>
<rect x="17.7" y="19.5" width="2" height="2" fill="#b8b8c8"/>
<path d="M22 10 L26 104" stroke="#101018" stroke-width="3"/><path d="M9 40 L7 100" stroke="#181820" stroke-width="2.5" opacity="0.6"/>
</g>
<rect x="33.5" y="134.6" width="3.5" height="1" fill="#8a7c8a" opacity="0.26"/>
<rect x="28.1" y="121.4" width="3.0" height="1" fill="#8a7c8a" opacity="0.60"/>
<rect x="52.8" y="134.8" width="1.6" height="1" fill="#8a7c8a" opacity="0.37"/>
<rect x="29.9" y="113.1" width="1.3" height="1" fill="#8a7c8a" opacity="0.32"/>
<rect x="27.7" y="118.6" width="1.9" height="1" fill="#8a7c8a" opacity="0.30"/>
<rect x="13.6" y="133.1" width="1.9" height="1" fill="#8a7c8a" opacity="0.51"/>
<rect x="20.7" y="116.2" width="3.8" height="1" fill="#8a7c8a" opacity="0.28"/>
<rect x="10.0" y="127.4" width="1.8" height="1" fill="#8a7c8a" opacity="0.35"/>
<rect x="33.3" y="115.9" width="2.4" height="1" fill="#8a7c8a" opacity="0.21"/>
<rect x="41.0" y="124.0" width="2.1" height="1" fill="#8a7c8a" opacity="0.59"/>
<rect x="35.7" y="137.8" width="1.0" height="1" fill="#8a7c8a" opacity="0.49"/>
<rect x="6.5" y="112.8" width="3.8" height="1" fill="#8a7c8a" opacity="0.33"/>
<rect x="49.0" y="115.4" width="2.7" height="1" fill="#8a7c8a" opacity="0.50"/>
<rect x="19.3" y="128.5" width="3.6" height="1" fill="#8a7c8a" opacity="0.33"/>
<rect x="24.7" y="112.1" width="3.2" height="1" fill="#8a7c8a" opacity="0.46"/>
<rect x="64.0" y="138.8" width="2.9" height="1" fill="#8a7c8a" opacity="0.51"/>
<rect x="58.1" y="135.0" width="3.5" height="1" fill="#8a7c8a" opacity="0.45"/>
<rect x="45.0" y="123.2" width="1.7" height="1" fill="#8a7c8a" opacity="0.37"/>
<rect x="49.6" y="123.0" width="3.0" height="1" fill="#8a7c8a" opacity="0.50"/>
<rect x="64.5" y="133.6" width="3.8" height="1" fill="#8a7c8a" opacity="0.39"/>
<rect x="38.7" y="133.7" width="1.5" height="1" fill="#8a7c8a" opacity="0.37"/>
<rect x="37.5" y="134.1" width="1.9" height="1" fill="#8a7c8a" opacity="0.31"/>
<rect x="49.2" y="111.2" width="1.6" height="1" fill="#8a7c8a" opacity="0.59"/>
<rect x="46.9" y="128.5" width="3.6" height="1" fill="#8a7c8a" opacity="0.48"/>
<rect x="33.5" y="139.6" width="1.8" height="1" fill="#8a7c8a" opacity="0.37"/>
<rect x="12.0" y="119.4" width="1.4" height="1" fill="#8a7c8a" opacity="0.24"/>
<rect x="65.9" y="126.0" width="4.0" height="1" fill="#8a7c8a" opacity="0.41"/>
<rect x="3.5" y="130.0" width="3.4" height="1" fill="#8a7c8a" opacity="0.36"/>
<rect x="24.6" y="118.4" width="1.9" height="1" fill="#8a7c8a" opacity="0.50"/>
<rect x="25.7" y="126.4" width="2.1" height="1" fill="#8a7c8a" opacity="0.48"/>
<rect x="28.9" y="137.4" width="1.9" height="1" fill="#8a7c8a" opacity="0.60"/>
<rect x="6.3" y="138.1" width="3.6" height="1" fill="#8a7c8a" opacity="0.43"/>
<rect x="56.3" y="132.0" width="1.3" height="1" fill="#8a7c8a" opacity="0.56"/>
<rect x="33.1" y="133.6" width="3.5" height="1" fill="#8a7c8a" opacity="0.40"/>
<rect x="18.6" y="139.3" width="3.1" height="1" fill="#8a7c8a" opacity="0.50"/>
<rect x="44.8" y="144.1" width="3.9" height="1" fill="#8a7c8a" opacity="0.51"/>
<rect x="25.2" y="128.0" width="2.5" height="1" fill="#8a7c8a" opacity="0.50"/>
<rect x="28.5" y="136.4" width="2.4" height="1" fill="#8a7c8a" opacity="0.48"/>
<rect x="14.3" y="141.5" width="3.1" height="1" fill="#8a7c8a" opacity="0.26"/>
<rect x="8.5" y="131.5" width="2.4" height="1" fill="#8a7c8a" opacity="0.55"/>
<rect x="6.0" y="138.3" width="3.4" height="1" fill="#8a7c8a" opacity="0.32"/>
<rect x="6.3" y="141.4" width="1.9" height="1" fill="#8a7c8a" opacity="0.56"/>
<rect x="36.5" y="143.5" width="3.5" height="1" fill="#8a7c8a" opacity="0.48"/>
<rect x="29.1" y="142.9" width="2.4" height="1" fill="#8a7c8a" opacity="0.24"/>
<rect x="60.9" y="116.0" width="1.6" height="1" fill="#8a7c8a" opacity="0.38"/>
<rect x="36.1" y="140.5" width="2.0" height="1" fill="#8a7c8a" opacity="0.56"/>
<rect x="7.0" y="117.4" width="3.2" height="1" fill="#8a7c8a" opacity="0.47"/>
<rect x="65.1" y="115.0" width="1.4" height="1" fill="#8a7c8a" opacity="0.42"/>
<rect x="67.6" y="134.5" width="3.4" height="1" fill="#8a7c8a" opacity="0.58"/>
<rect x="22.0" y="113.0" width="3.1" height="1" fill="#8a7c8a" opacity="0.22"/>
<rect x="15.3" y="120.4" width="1.1" height="1" fill="#8a7c8a" opacity="0.47"/>
<rect x="15.1" y="136.3" width="4.0" height="1" fill="#8a7c8a" opacity="0.49"/>
<rect x="40.8" y="132.0" width="2.1" height="1" fill="#8a7c8a" opacity="0.25"/>
<rect x="49.0" y="134.5" width="1.8" height="1" fill="#8a7c8a" opacity="0.51"/>
<rect x="60.9" y="123.5" width="3.4" height="1" fill="#8a7c8a" opacity="0.36"/>
<rect x="35.2" y="139.2" width="3.8" height="1" fill="#8a7c8a" opacity="0.59"/>
<rect x="59.4" y="135.9" width="2.1" height="1" fill="#8a7c8a" opacity="0.29"/>
<rect x="32.4" y="115.6" width="2.4" height="1" fill="#8a7c8a" opacity="0.23"/>
<rect x="20.3" y="114.4" width="3.4" height="1" fill="#8a7c8a" opacity="0.43"/>
<rect x="53.2" y="129.8" width="3.5" height="1" fill="#8a7c8a" opacity="0.38"/>
<rect x="34.4" y="110.2" width="2.2" height="1" fill="#8a7c8a" opacity="0.27"/>
<rect x="68.5" y="121.7" width="2.3" height="1" fill="#8a7c8a" opacity="0.26"/>
<rect x="32.4" y="127.3" width="3.6" height="1" fill="#8a7c8a" opacity="0.51"/>
<rect x="22.9" y="126.2" width="3.8" height="1" fill="#8a7c8a" opacity="0.47"/>
<rect x="66.2" y="128.4" width="1.7" height="1" fill="#8a7c8a" opacity="0.60"/>
<rect x="50.6" y="143.5" width="3.6" height="1" fill="#8a7c8a" opacity="0.59"/>
<rect x="64.3" y="120.1" width="1.2" height="1" fill="#8a7c8a" opacity="0.58"/>
<rect x="65.1" y="133.4" width="3.8" height="1" fill="#8a7c8a" opacity="0.26"/>
<rect x="59.3" y="132.7" width="3.9" height="1" fill="#8a7c8a" opacity="0.21"/>
<rect x="35.0" y="140.1" width="2.9" height="1" fill="#8a7c8a" opacity="0.34"/>
<rect x="17" y="98" width="16" height="20" fill="#c84818" filter="url(#gbl)" opacity="0.8"/>

<circle cx="36" cy="7" r="3" fill="url(#sph)"/>
<circle cx="55" cy="13" r="4.5" fill="url(#sph)"/>
<circle cx="68" cy="30" r="4.5" fill="url(#sph)"/>
<circle cx="73" cy="40" r="3" fill="url(#sph)" opacity="0.8"/>
<circle cx="78" cy="72" r="7" fill="url(#sph)"/>
<circle cx="66" cy="112" r="8" fill="url(#sph)"/>
<path d="M61 118 L61 140" stroke="#b0a8c0" stroke-width="2" opacity="0.4"/>
</g></svg>
<div style="position:absolute;left:689.5px;top:492.4px;width:777.5px;height:256.6px;box-shadow:inset 1.5px 1.5px 0 #8a8884, inset 3px 3px 0 #fff, 1.5px 1.5px 0 #fff, inset -1.5px -1.5px 0 #8a8884"></div>
<div class="t" style="left:712.0px;top:513.16px;font-size:18px;color:#000;transform:scale(1.0066,1.0);">ĐC thường trú:</div>
<div style="position:absolute;left:838px;top:507px;width:613.5px;height:28px;background:#fff;box-shadow:inset 0 0 0 2px #141414"></div>
<div class="t" style="left:853.8px;top:513.16px;font-size:18px;color:#000;transform:scale(1.0200,1.0);">73/12 Phan Đình Phùng</div>
<div class="t" style="left:712.0px;top:550.96px;font-size:18px;color:#000;transform:scale(1.0615,1.0);">Tỉnh thành:</div>
<div style="position:absolute;left:838px;top:548.4px;width:196px;height:28.600000000000023px;background:#fff;box-shadow:inset 0 0 0 2px #141414"></div>
<div style="position:absolute;left:1009px;top:550.4px;width:23px;height:24.600000000000023px;background:#d4d0c8;box-shadow:inset 1.5px 1.5px 0 #fff, inset -2px -2px 0 #303030, inset -3.5px -3.5px 0 #808080"></div>
<svg style="position:absolute;left:1013.5px;top:559.2px" width="12" height="7" viewBox="0 0 12 7"><path d="M0.5 0.8 L11 0.8 L5.75 6.3 Z" fill="#000"/></svg>
<div class="t" style="left:854.6px;top:553.36px;font-size:18px;color:#000;transform:scale(0.9662,1.0);">TP Hồ Chí Minh</div>
<div class="t" style="left:1147.6px;top:550.36px;font-size:18px;color:#000;transform:scale(1.0879,1.0);">Quận/Huyện:</div>
<div style="position:absolute;left:1268.6px;top:548.9px;width:181.20000000000005px;height:28.899999999999977px;background:#fff;box-shadow:inset 0 0 0 2px #141414"></div>
<div style="position:absolute;left:1424.8px;top:550.9px;width:23.0px;height:24.899999999999977px;background:#d4d0c8;box-shadow:inset 1.5px 1.5px 0 #fff, inset -2px -2px 0 #303030, inset -3.5px -3.5px 0 #808080"></div>
<svg style="position:absolute;left:1429.3px;top:559.8499999999999px" width="12" height="7" viewBox="0 0 12 7"><path d="M0.5 0.8 L11 0.8 L5.75 6.3 Z" fill="#000"/></svg>
<div class="t" style="left:1284.4px;top:552.76px;font-size:18px;color:#000;">Bình Thạnh</div>
<div class="t" style="left:712.0px;top:589.36px;font-size:18px;color:#000;transform:scale(1.0107,1.0);">ĐC tạm trú:</div>
<div style="position:absolute;left:838px;top:588px;width:613.5px;height:25.700000000000045px;background:#fff;box-shadow:inset 0 0 0 2px #141414"></div>
<div class="t" style="left:854.6px;top:589.36px;font-size:18px;color:#000;transform:scale(1.0341,1.0);">182 Trần Bình Trọng</div>
<div class="t" style="left:712.0px;top:627.66px;font-size:18px;color:#000;transform:scale(1.0615,1.0);">Tỉnh thành:</div>
<div style="position:absolute;left:838px;top:625.3px;width:196px;height:29.0px;background:#fff;box-shadow:inset 0 0 0 2px #141414"></div>
<div style="position:absolute;left:1009px;top:627.3px;width:23px;height:25.0px;background:#d4d0c8;box-shadow:inset 1.5px 1.5px 0 #fff, inset -2px -2px 0 #303030, inset -3.5px -3.5px 0 #808080"></div>
<svg style="position:absolute;left:1013.5px;top:636.3px" width="12" height="7" viewBox="0 0 12 7"><path d="M0.5 0.8 L11 0.8 L5.75 6.3 Z" fill="#000"/></svg>
<div class="t" style="left:854.6px;top:630.06px;font-size:18px;color:#000;transform:scale(0.9662,1.0);">TP Hồ Chí Minh</div>
<div class="t" style="left:1147.6px;top:626.56px;font-size:18px;color:#000;transform:scale(1.0879,1.0);">Quận/Huyện:</div>
<div style="position:absolute;left:1268.6px;top:624.8px;width:181.20000000000005px;height:28.700000000000045px;background:#fff;box-shadow:inset 0 0 0 2px #141414"></div>
<div style="position:absolute;left:1424.8px;top:626.8px;width:23.0px;height:24.700000000000045px;background:#d4d0c8;box-shadow:inset 1.5px 1.5px 0 #fff, inset -2px -2px 0 #303030, inset -3.5px -3.5px 0 #808080"></div>
<svg style="position:absolute;left:1429.3px;top:635.65px" width="12" height="7" viewBox="0 0 12 7"><path d="M0.5 0.8 L11 0.8 L5.75 6.3 Z" fill="#000"/></svg>
<div class="t" style="left:1284.4px;top:628.96px;font-size:18px;color:#000;">Bình Thạnh</div>
<div class="t" style="left:712.0px;top:669.56px;font-size:18px;color:#000;transform:scale(1.0394,1.0);">Diện lưu trú:</div>
<div style="position:absolute;left:838px;top:667.2px;width:159.5px;height:28.799999999999955px;background:#fff;box-shadow:inset 0 0 0 2px #141414"></div>
<div style="position:absolute;left:972.5px;top:669.2px;width:23.0px;height:24.799999999999955px;background:#d4d0c8;box-shadow:inset 1.5px 1.5px 0 #fff, inset -2px -2px 0 #303030, inset -3.5px -3.5px 0 #808080"></div>
<svg style="position:absolute;left:977.0px;top:678.1px" width="12" height="7" viewBox="0 0 12 7"><path d="M0.5 0.8 L11 0.8 L5.75 6.3 Z" fill="#000"/></svg>
<div class="t" style="left:854.6px;top:671.46px;font-size:18px;color:#000;transform:scale(1.0481,1.0);">Tạm trú</div>
<div class="t" style="left:1147.6px;top:669.66px;font-size:18px;color:#000;transform:scale(1.0797,1.0);">Email:</div>
<div style="position:absolute;left:1229.6px;top:665px;width:220.4000000000001px;height:28.600000000000023px;background:#fff;box-shadow:inset 0 0 0 2px #141414"></div>
<div class="t" style="left:1245.5px;top:669.66px;font-size:18px;color:#000;transform:scale(1.0208,1.0);">ptakhanh@huongsen.co</div>
<div class="t" style="left:712.0px;top:711.66px;font-size:18px;color:#000;transform:scale(1.0736,1.0);">Điện thoại:</div>
<div style="position:absolute;left:838px;top:707.4px;width:232px;height:28.0px;background:#fff;box-shadow:inset 0 0 0 2px #141414"></div>
<div class="t" style="left:853.8px;top:711.76px;font-size:18px;color:#000;transform:scale(1.0417,1.0);">8383962</div>
<div class="t" style="left:1147.6px;top:712.46px;font-size:18px;color:#000;transform:scale(1.0465,1.0);">Nhắn tin:</div>
<div style="position:absolute;left:1229.6px;top:707.5px;width:220.4000000000001px;height:28.0px;background:#fff;box-shadow:inset 0 0 0 2px #141414"></div>
<div style="position:absolute;left:689.5px;top:765px;width:777.5px;height:135.39999999999998px;box-shadow:inset 1.5px 1.5px 0 #8a8884, inset 3px 3px 0 #fff, 1.5px 1.5px 0 #fff, inset -1.5px -1.5px 0 #8a8884"></div>
<div class="t" style="left:711.8px;top:787.06px;font-size:18px;color:#000;transform:scale(1.0840,1.0);">Họ tên cha:</div>
<div style="position:absolute;left:823.3px;top:782px;width:290.29999999999995px;height:28.5px;background:#fff;box-shadow:inset 0 0 0 2px #141414"></div>
<div class="t" style="left:838.4px;top:787.06px;font-size:18px;color:#000;transform:scale(0.9825,1.0);">Phan Văn X</div>
<div class="t" style="left:711.8px;top:824.76px;font-size:18px;color:#000;transform:scale(1.0846,1.0);">Họ tên mẹ:</div>
<div style="position:absolute;left:823.3px;top:820px;width:290.29999999999995px;height:28.5px;background:#fff;box-shadow:inset 0 0 0 2px #141414"></div>
<div class="t" style="left:838.4px;top:824.76px;font-size:18px;color:#000;transform:scale(1.0387,1.0);">Nguyễn Thị Y</div>
<div class="t" style="left:711.8px;top:861.26px;font-size:18px;color:#000;transform:scale(1.0642,1.0);">Họ tên NĐĐ:</div>
<div style="position:absolute;left:823.3px;top:859.5px;width:290.29999999999995px;height:26.799999999999955px;background:#fff;box-shadow:inset 0 0 0 2px #141414"></div>
<div class="t" style="left:1144.3px;top:787.06px;font-size:18px;color:#000;transform:scale(1.1112,1.0);">Nghề nghiệp:</div>
<div class="t" style="left:1144.3px;top:823.76px;font-size:18px;color:#000;transform:scale(1.1112,1.0);">Nghề nghiệp:</div>
<div class="t" style="left:1144.3px;top:861.36px;font-size:18px;color:#000;transform:scale(1.1112,1.0);">Nghề nghiệp:</div>
<div style="position:absolute;left:1267.4px;top:782.4px;width:181.0px;height:28.200000000000045px;background:#fff;box-shadow:inset 0 0 0 2px #141414"></div>
<div class="t" style="left:1283.1px;top:787.06px;font-size:18px;color:#000;">Nghỉ hưu</div>
<div style="position:absolute;left:1267.4px;top:821.5px;width:181.0px;height:28.5px;background:#fff;box-shadow:inset 0 0 0 2px #141414"></div>
<div class="t" style="left:1283.1px;top:824.76px;font-size:18px;color:#000;">Nghỉ hưu</div>
<div style="position:absolute;left:1267.4px;top:859px;width:181.0px;height:27.299999999999955px;background:#fff;box-shadow:inset 0 0 0 2px #141414"></div>
<div style="position:absolute;left:842.7px;top:926.4px;width:134.29999999999995px;height:42.10000000000002px;background:#d4d0c8;box-shadow:inset 1.5px 1.5px 0 #fff, inset -1.5px -1.5px 0 #404040, inset -3px -3px 0 #808080"></div>
<div class="t" style="left:871.5px;top:938.66px;font-size:18px;color:#000;transform:scale(1.0881,1.0);">Cập nhật</div>
<div style="position:absolute;left:991.2px;top:926.5px;width:134.20000000000005px;height:42.299999999999955px;background:#d4d0c8;box-shadow:inset 1.5px 1.5px 0 #fff, inset -1.5px -1.5px 0 #404040, inset -3px -3px 0 #808080"></div>
<div class="t" style="left:1030.0px;top:938.76px;font-size:18px;color:#8c8a86;transform:scale(1.1044,1.0);text-shadow:1px 1px 0 #fff;">Đồng ý</div>
<div style="position:absolute;left:1137.3px;top:926.5px;width:134.10000000000014px;height:42.299999999999955px;background:#d4d0c8;box-shadow:inset 1.5px 1.5px 0 #fff, inset -1.5px -1.5px 0 #404040, inset -3px -3px 0 #808080"></div>
<svg style="position:absolute;left:1162px;top:934px" width="29" height="26" viewBox="0 0 29 26"><path d="M2 4 L6 1.5 L14 9.5 L24 1 L27.5 3.5 L17.5 13 L26 22 L22.5 25 L14 16.5 L5 25 L1.5 22 L10.5 13 Z" fill="#ee1c1c"/><path d="M5 25 L1.5 22 L3 21 L6 23.5 Z M22.5 25 L26 22 L27 23 L23 25.5Z" fill="#8a1010"/></svg>
<div class="t" style="left:1203.4px;top:936.66px;font-size:18px;color:#8c8a86;transform:scale(1.1245,1.0);text-shadow:1px 1px 0 #fff;">Hủy</div>
<div style="position:absolute;left:1284.4px;top:926.5px;width:134.0999999999999px;height:42.299999999999955px;background:#d4d0c8;box-shadow:inset 1.5px 1.5px 0 #fff, inset -1.5px -1.5px 0 #404040, inset -3px -3px 0 #808080"></div>
<div class="t" style="left:1330.5px;top:939.66px;font-size:18px;color:#000;transform:scale(1.1362,1.0);">Thoát</div>
</body></html>
